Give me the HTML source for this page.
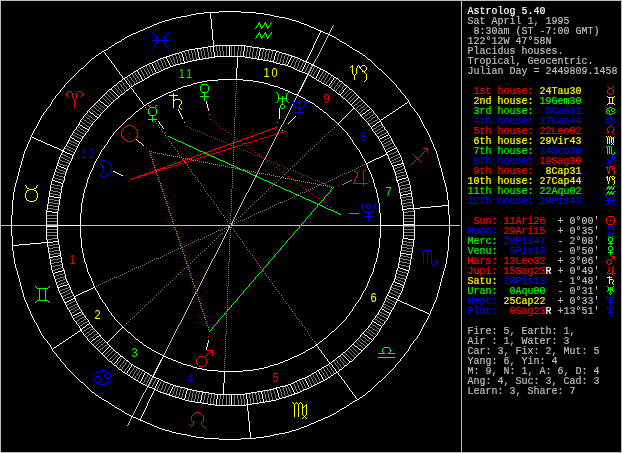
<!DOCTYPE html>
<html><head><meta charset="utf-8"><title>Astrolog 5.40</title>
<style>
html,body{margin:0;padding:0;background:#000;overflow:hidden}
svg{display:block;shape-rendering:crispEdges}
text{font-family:"Liberation Mono",monospace;white-space:pre}
text.sb{font-size:10px;stroke-width:0.2px}
text.hn{font-family:"Liberation Sans",sans-serif;font-size:13px;text-anchor:middle}
text.two{letter-spacing:2.2px}
</style></head><body>
<svg xml:space="preserve" width="622" height="453" viewBox="0 0 622 453">
<rect width="622" height="453" fill="#000"/>
<path fill="#ffffff" d="M219 11h22v1h-22zM204 12h15v1h-15zM241 12h15v1h-15zM196 13h8v1h-8zM256 13h8v1h-8zM191 14h5v1h-5zM264 14h6v1h-6zM187 15h4v1h-4zM270 15h4v1h-4zM181 16h6v1h-6zM274 16h5v1h-5zM176 17h5v1h-5zM279 17h6v1h-6zM172 18h4v1h-4zM285 18h4v1h-4zM169 19h3v1h-3zM289 19h3v1h-3zM165 20h4v1h-4zM292 20h4v1h-4zM162 21h3v1h-3zM296 21h3v1h-3zM159 22h3v1h-3zM299 22h2v1h-2zM157 23h2v1h-2zM301 23h3v1h-3zM154 24h3v1h-3zM304 24h3v1h-3zM152 25h2v1h-2zM307 25h2v1h-2zM150 26h2v1h-2zM309 26h2v1h-2zM147 27h3v1h-3zM311 27h3v1h-3zM145 28h2v1h-2zM314 28h2v1h-2zM143 29h2v1h-2zM316 29h2v1h-2zM140 30h3v1h-3zM318 30h3v1h-3zM138 31h2v1h-2zM320 31h3v1h-3zM136 32h2v1h-2zM323 32h2v1h-2zM133 33h3v1h-3zM325 33h3v1h-3zM131 34h2v1h-2zM328 34h2v1h-2zM129 35h2v1h-2zM330 35h2v1h-2zM127 36h2v1h-2zM332 36h2v1h-2zM125 37h2v1h-2zM334 37h2v1h-2zM122 39h2v1h-2zM337 39h2v1h-2zM119 41h2v1h-2zM340 41h2v1h-2zM117 42h2v1h-2zM342 42h2v1h-2zM115 43h2v1h-2zM344 43h2v1h-2zM112 45h2v1h-2zM215 45h31v1h-31zM347 45h2v1h-2zM208 46h7v1h-7zM246 46h6v1h-6zM109 47h2v1h-2zM202 47h6v1h-6zM252 47h7v1h-7zM350 47h2v1h-2zM195 48h7v1h-7zM259 48h6v1h-6zM106 49h2v1h-2zM189 49h6v1h-6zM265 49h6v1h-6zM353 49h2v1h-2zM104 50h2v1h-2zM185 50h4v1h-4zM271 50h5v1h-5zM355 50h2v1h-2zM102 51h2v1h-2zM182 51h3v1h-3zM276 51h3v1h-3zM357 51h2v1h-2zM179 52h3v1h-3zM279 52h3v1h-3zM99 53h2v1h-2zM175 53h4v1h-4zM282 53h4v1h-4zM360 53h2v1h-2zM172 54h3v1h-3zM286 54h3v1h-3zM96 55h2v1h-2zM169 55h3v1h-3zM289 55h3v1h-3zM363 55h2v1h-2zM166 56h3v1h-3zM214 56h31v1h-31zM291 56h4v1h-4zM163 57h4v1h-4zM209 57h6v1h-6zM245 57h6v1h-6zM295 57h3v1h-3zM92 58h2v1h-2zM160 58h3v1h-3zM203 58h6v1h-6zM251 58h6v1h-6zM298 58h2v1h-2zM158 59h2v1h-2zM197 59h6v1h-6zM257 59h6v1h-6zM300 59h2v1h-2zM368 59h2v1h-2zM156 60h2v1h-2zM192 60h5v1h-5zM263 60h6v1h-6zM302 60h2v1h-2zM154 61h2v1h-2zM188 61h4v1h-4zM269 61h5v1h-5zM304 61h3v1h-3zM152 62h2v1h-2zM184 62h4v1h-4zM273 62h3v1h-3zM306 62h3v1h-3zM149 63h3v1h-3zM180 63h5v1h-5zM276 63h4v1h-4zM309 63h2v1h-2zM147 64h2v1h-2zM176 64h4v1h-4zM280 64h5v1h-5zM311 64h2v1h-2zM145 65h2v1h-2zM173 65h3v1h-3zM285 65h3v1h-3zM313 65h2v1h-2zM143 66h2v1h-2zM170 66h3v1h-3zM288 66h3v1h-3zM315 66h2v1h-2zM141 67h2v1h-2zM168 67h2v1h-2zM291 67h2v1h-2zM317 67h2v1h-2zM81 68h2v1h-2zM139 68h2v1h-2zM165 68h3v1h-3zM293 68h2v1h-2zM319 68h2v1h-2zM163 69h2v1h-2zM295 69h2v1h-2zM320 69h3v1h-3zM379 69h2v1h-2zM136 70h2v1h-2zM161 70h2v1h-2zM297 70h2v1h-2zM323 70h2v1h-2zM134 71h2v1h-2zM159 71h2v1h-2zM299 71h3v1h-3zM325 71h2v1h-2zM156 72h3v1h-3zM302 72h3v1h-3zM131 73h2v1h-2zM154 73h2v1h-2zM305 73h2v1h-2zM328 73h2v1h-2zM152 74h2v1h-2zM307 74h2v1h-2zM128 75h2v1h-2zM150 75h2v1h-2zM309 75h2v1h-2zM331 75h2v1h-2zM125 77h2v1h-2zM147 77h2v1h-2zM312 77h2v1h-2zM334 77h2v1h-2zM123 78h2v1h-2zM145 78h2v1h-2zM314 78h2v1h-2zM336 78h2v1h-2zM218 79h25v1h-25zM142 80h2v1h-2zM207 80h11v1h-11zM243 80h10v1h-10zM317 80h2v1h-2zM119 81h2v1h-2zM140 81h2v1h-2zM202 81h5v1h-5zM253 81h6v1h-6zM319 81h2v1h-2zM340 81h2v1h-2zM138 82h2v1h-2zM197 82h5v1h-5zM259 82h5v1h-5zM136 83h2v1h-2zM193 83h4v1h-4zM264 83h4v1h-4zM322 83h2v1h-2zM134 84h2v1h-2zM191 84h2v1h-2zM268 84h2v1h-2zM324 84h2v1h-2zM114 85h2v1h-2zM187 85h4v1h-4zM270 85h4v1h-4zM326 85h2v1h-2zM345 85h2v1h-2zM131 86h2v1h-2zM183 86h4v1h-4zM274 86h4v1h-4zM181 87h2v1h-2zM278 87h2v1h-2zM329 87h2v1h-2zM178 88h3v1h-3zM280 88h3v1h-3zM109 89h3v1h-3zM176 89h2v1h-2zM283 89h2v1h-2zM350 89h2v1h-2zM126 90h2v1h-2zM173 90h3v1h-3zM285 90h3v1h-3zM333 90h2v1h-2zM171 91h2v1h-2zM288 91h2v1h-2zM168 92h3v1h-3zM290 92h2v1h-2zM166 93h2v1h-2zM292 93h2v1h-2zM121 94h2v1h-2zM164 94h2v1h-2zM294 94h4v1h-4zM338 94h3v1h-3zM162 95h2v1h-2zM297 95h2v1h-2zM118 96h2v1h-2zM160 96h2v1h-2zM299 96h2v1h-2zM158 97h2v1h-2zM301 97h2v1h-2zM358 97h2v1h-2zM116 98h2v1h-2zM156 98h2v1h-2zM303 98h2v1h-2zM343 98h2v1h-2zM154 99h2v1h-2zM98 100h2v1h-2zM152 100h2v1h-2zM306 100h2v1h-2zM308 101h2v1h-2zM101 102h2v1h-2zM149 102h2v1h-2zM310 102h2v1h-2zM147 103h2v1h-2zM312 103h2v1h-2zM405 103h2v1h-2zM350 104h2v1h-2zM105 105h2v1h-2zM144 105h2v1h-2zM402 105h2v1h-2zM107 106h2v1h-2zM316 106h2v1h-2zM399 107h2v1h-2zM140 108h2v1h-2zM353 108h2v1h-2zM320 109h2v1h-2zM396 109h2v1h-2zM367 110h2v1h-2zM136 111h2v1h-2zM393 111h2v1h-2zM324 112h2v1h-2zM91 113h2v1h-2zM363 113h2v1h-2zM390 113h2v1h-2zM360 115h2v1h-2zM387 115h2v1h-2zM95 116h2v1h-2zM97 117h2v1h-2zM384 117h2v1h-2zM128 118h2v1h-2zM332 119h2v1h-2zM381 119h2v1h-2zM379 121h2v1h-2zM377 122h2v1h-2zM337 123h2v1h-2zM78 124h2v1h-2zM80 125h2v1h-2zM373 125h2v1h-2zM83 127h2v1h-2zM85 128h2v1h-2zM87 129h2v1h-2zM386 135h2v1h-2zM384 136h2v1h-2zM32 137h2v1h-2zM70 137h2v1h-2zM382 137h2v1h-2zM34 138h2v1h-2zM72 138h2v1h-2zM380 138h2v1h-2zM36 139h2v1h-2zM38 140h3v1h-3zM75 140h2v1h-2zM41 141h2v1h-2zM77 141h2v1h-2zM43 142h2v1h-2zM139 142h2v1h-2zM45 143h2v1h-2zM47 144h3v1h-3zM50 145h2v1h-2zM52 146h2v1h-2zM54 147h3v1h-3zM57 148h2v1h-2zM394 148h3v1h-3zM59 149h2v1h-2zM392 149h2v1h-2zM61 150h3v1h-3zM390 150h2v1h-2zM62 151h3v1h-3zM388 151h2v1h-2zM65 152h2v1h-2zM386 152h2v1h-2zM67 153h3v1h-3zM70 154h2v1h-2zM385 154h3v1h-3zM72 155h2v1h-2zM383 155h2v1h-2zM381 156h2v1h-2zM379 157h2v1h-2zM376 158h3v1h-3zM374 159h2v1h-2zM372 160h2v1h-2zM370 161h2v1h-2zM368 162h2v1h-2zM366 163h2v1h-2zM401 163h3v1h-3zM397 164h4v1h-4zM57 165h2v1h-2zM394 165h3v1h-3zM59 166h2v1h-2zM392 166h2v1h-2zM61 167h3v1h-3zM64 168h2v1h-2zM66 169h2v1h-2zM113 171h2v1h-2zM115 172h2v1h-2zM117 173h2v1h-2zM119 174h2v1h-2zM121 175h2v1h-2zM406 177h2v1h-2zM402 178h4v1h-4zM399 179h3v1h-3zM52 180h3v1h-3zM396 180h3v1h-3zM55 181h3v1h-3zM58 182h3v1h-3zM61 183h2v1h-2zM408 193h4v1h-4zM403 194h5v1h-5zM400 195h3v1h-3zM49 196h5v1h-5zM54 197h7v1h-7zM442 205h7v1h-7zM431 206h11v1h-11zM420 207h11v1h-11zM407 208h13v1h-13zM402 209h5v1h-5zM46 211h6v1h-6zM52 212h6v1h-6zM403 224h12v1h-12zM57 225h24v1h-24zM380 225h24v1h-24zM46 226h12v1h-12zM403 238h5v1h-5zM408 239h7v1h-7zM53 241h6v1h-6zM41 242h12v1h-12zM30 243h11v1h-11zM19 244h11v1h-11zM12 245h7v1h-7zM400 253h6v1h-6zM406 254h6v1h-6zM58 255h3v1h-3zM53 256h5v1h-5zM49 257h4v1h-4zM398 267h2v1h-2zM400 268h3v1h-3zM403 269h3v1h-3zM62 270h3v1h-3zM406 270h3v1h-3zM58 271h4v1h-4zM55 272h3v1h-3zM53 273h2v1h-2zM393 281h2v1h-2zM395 282h2v1h-2zM397 283h3v1h-3zM67 284h2v1h-2zM400 284h2v1h-2zM63 285h4v1h-4zM402 285h2v1h-2zM60 286h3v1h-3zM57 287h3v1h-3zM93 287h2v1h-2zM91 288h2v1h-2zM89 289h2v1h-2zM87 290h2v1h-2zM84 291h3v1h-3zM82 292h2v1h-2zM80 293h2v1h-2zM78 294h2v1h-2zM76 295h2v1h-2zM387 295h2v1h-2zM74 296h2v1h-2zM389 296h2v1h-2zM391 297h3v1h-3zM73 298h3v1h-3zM394 298h2v1h-2zM71 299h2v1h-2zM396 299h2v1h-2zM69 300h2v1h-2zM397 300h3v1h-3zM67 301h2v1h-2zM400 301h2v1h-2zM64 302h3v1h-3zM402 302h2v1h-2zM404 303h3v1h-3zM407 304h2v1h-2zM409 305h2v1h-2zM411 306h2v1h-2zM413 307h3v1h-3zM416 308h2v1h-2zM382 309h2v1h-2zM418 309h2v1h-2zM420 310h3v1h-3zM385 311h2v1h-2zM423 311h2v1h-2zM79 312h2v1h-2zM387 312h2v1h-2zM425 312h2v1h-2zM77 313h2v1h-2zM389 313h2v1h-2zM427 313h2v1h-2zM75 314h2v1h-2zM73 315h2v1h-2zM372 321h2v1h-2zM374 322h2v1h-2zM87 324h2v1h-2zM377 324h2v1h-2zM379 325h2v1h-2zM83 327h2v1h-2zM122 327h2v1h-2zM80 329h2v1h-2zM80 330h2v1h-2zM78 331h2v1h-2zM332 331h2v1h-2zM128 332h2v1h-2zM75 333h2v1h-2zM362 333h2v1h-2zM72 335h2v1h-2zM99 335h2v1h-2zM365 335h2v1h-2zM97 336h2v1h-2zM69 337h2v1h-2zM324 338h2v1h-2zM369 338h2v1h-2zM66 339h2v1h-2zM93 339h2v1h-2zM136 339h2v1h-2zM63 341h2v1h-2zM320 341h2v1h-2zM106 342h2v1h-2zM140 342h2v1h-2zM60 343h2v1h-2zM316 344h2v1h-2zM352 344h2v1h-2zM57 345h2v1h-2zM144 345h2v1h-2zM315 345h2v1h-2zM109 346h2v1h-2zM355 346h2v1h-2zM54 347h2v1h-2zM147 347h2v1h-2zM312 347h2v1h-2zM149 348h2v1h-2zM310 348h2v1h-2zM308 349h2v1h-2zM359 349h2v1h-2zM152 350h2v1h-2zM306 350h2v1h-2zM361 350h2v1h-2zM154 351h2v1h-2zM116 352h2v1h-2zM156 352h2v1h-2zM303 352h2v1h-2zM343 352h2v1h-2zM101 353h2v1h-2zM158 353h2v1h-2zM301 353h2v1h-2zM160 354h2v1h-2zM299 354h2v1h-2zM341 354h2v1h-2zM162 355h2v1h-2zM297 355h2v1h-2zM120 356h3v1h-3zM163 356h3v1h-3zM294 356h3v1h-3zM338 356h2v1h-2zM166 357h2v1h-2zM292 357h2v1h-2zM168 358h3v1h-3zM290 358h2v1h-2zM171 359h2v1h-2zM288 359h2v1h-2zM126 360h2v1h-2zM173 360h3v1h-3zM285 360h3v1h-3zM333 360h2v1h-2zM109 361h2v1h-2zM176 361h2v1h-2zM283 361h2v1h-2zM349 361h3v1h-3zM178 362h3v1h-3zM280 362h3v1h-3zM181 363h2v1h-2zM278 363h2v1h-2zM329 363h2v1h-2zM131 364h2v1h-2zM183 364h4v1h-4zM274 364h4v1h-4zM114 365h2v1h-2zM187 365h4v1h-4zM270 365h4v1h-4zM326 365h2v1h-2zM345 365h2v1h-2zM134 366h2v1h-2zM191 366h2v1h-2zM268 366h2v1h-2zM324 366h2v1h-2zM136 367h2v1h-2zM193 367h4v1h-4zM264 367h4v1h-4zM322 367h2v1h-2zM138 368h2v1h-2zM197 368h5v1h-5zM259 368h5v1h-5zM119 369h2v1h-2zM140 369h2v1h-2zM202 369h5v1h-5zM253 369h6v1h-6zM319 369h2v1h-2zM340 369h2v1h-2zM142 370h2v1h-2zM207 370h11v1h-11zM243 370h10v1h-10zM317 370h2v1h-2zM218 371h25v1h-25zM123 372h2v1h-2zM145 372h2v1h-2zM314 372h2v1h-2zM336 372h2v1h-2zM125 373h2v1h-2zM147 373h2v1h-2zM312 373h2v1h-2zM334 373h2v1h-2zM128 375h2v1h-2zM150 375h2v1h-2zM309 375h2v1h-2zM331 375h2v1h-2zM152 376h2v1h-2zM307 376h2v1h-2zM131 377h2v1h-2zM154 377h2v1h-2zM305 377h2v1h-2zM328 377h2v1h-2zM156 378h3v1h-3zM302 378h3v1h-3zM134 379h2v1h-2zM159 379h2v1h-2zM299 379h3v1h-3zM325 379h2v1h-2zM136 380h2v1h-2zM161 380h2v1h-2zM297 380h2v1h-2zM323 380h2v1h-2zM163 381h2v1h-2zM295 381h2v1h-2zM321 381h2v1h-2zM379 381h2v1h-2zM81 382h2v1h-2zM139 382h2v1h-2zM165 382h3v1h-3zM293 382h2v1h-2zM319 382h2v1h-2zM141 383h2v1h-2zM168 383h2v1h-2zM291 383h2v1h-2zM317 383h2v1h-2zM143 384h2v1h-2zM170 384h3v1h-3zM288 384h3v1h-3zM315 384h2v1h-2zM145 385h2v1h-2zM173 385h3v1h-3zM285 385h3v1h-3zM313 385h2v1h-2zM147 386h2v1h-2zM176 386h4v1h-4zM280 386h5v1h-5zM311 386h2v1h-2zM149 387h3v1h-3zM180 387h5v1h-5zM276 387h4v1h-4zM309 387h2v1h-2zM152 388h3v1h-3zM185 388h3v1h-3zM273 388h4v1h-4zM307 388h2v1h-2zM154 389h2v1h-2zM187 389h5v1h-5zM269 389h4v1h-4zM304 389h3v1h-3zM156 390h2v1h-2zM192 390h5v1h-5zM263 390h6v1h-6zM302 390h2v1h-2zM158 391h2v1h-2zM197 391h6v1h-6zM257 391h6v1h-6zM300 391h2v1h-2zM368 391h2v1h-2zM92 392h2v1h-2zM160 392h3v1h-3zM202 392h7v1h-7zM251 392h6v1h-6zM298 392h2v1h-2zM163 393h3v1h-3zM209 393h6v1h-6zM245 393h6v1h-6zM294 393h4v1h-4zM166 394h4v1h-4zM215 394h30v1h-30zM292 394h3v1h-3zM96 395h2v1h-2zM169 395h3v1h-3zM289 395h3v1h-3zM363 395h2v1h-2zM172 396h3v1h-3zM286 396h3v1h-3zM99 397h2v1h-2zM175 397h4v1h-4zM282 397h4v1h-4zM360 397h2v1h-2zM179 398h3v1h-3zM279 398h3v1h-3zM102 399h2v1h-2zM182 399h3v1h-3zM276 399h3v1h-3zM357 399h2v1h-2zM104 400h2v1h-2zM185 400h4v1h-4zM271 400h5v1h-5zM355 400h2v1h-2zM106 401h2v1h-2zM189 401h6v1h-6zM265 401h6v1h-6zM353 401h2v1h-2zM195 402h7v1h-7zM259 402h6v1h-6zM109 403h2v1h-2zM202 403h6v1h-6zM252 403h7v1h-7zM350 403h2v1h-2zM208 404h7v1h-7zM246 404h6v1h-6zM112 405h2v1h-2zM215 405h31v1h-31zM347 405h2v1h-2zM115 407h2v1h-2zM344 407h2v1h-2zM117 408h2v1h-2zM342 408h2v1h-2zM119 409h2v1h-2zM340 409h2v1h-2zM122 411h2v1h-2zM337 411h2v1h-2zM125 413h2v1h-2zM334 413h2v1h-2zM127 414h2v1h-2zM332 414h2v1h-2zM129 415h2v1h-2zM330 415h2v1h-2zM131 416h2v1h-2zM328 416h2v1h-2zM133 417h3v1h-3zM325 417h3v1h-3zM136 418h2v1h-2zM323 418h2v1h-2zM138 419h3v1h-3zM321 419h2v1h-2zM140 420h3v1h-3zM318 420h3v1h-3zM143 421h2v1h-2zM316 421h2v1h-2zM145 422h2v1h-2zM314 422h2v1h-2zM147 423h3v1h-3zM311 423h3v1h-3zM150 424h2v1h-2zM309 424h2v1h-2zM152 425h2v1h-2zM307 425h2v1h-2zM154 426h3v1h-3zM304 426h3v1h-3zM157 427h2v1h-2zM301 427h3v1h-3zM159 428h3v1h-3zM299 428h2v1h-2zM162 429h3v1h-3zM296 429h3v1h-3zM165 430h4v1h-4zM292 430h4v1h-4zM169 431h3v1h-3zM289 431h3v1h-3zM172 432h4v1h-4zM285 432h4v1h-4zM176 433h5v1h-5zM279 433h6v1h-6zM181 434h6v1h-6zM274 434h5v1h-5zM187 435h4v1h-4zM270 435h4v1h-4zM191 436h5v1h-5zM264 436h6v1h-6zM196 437h8v1h-8zM256 437h8v1h-8zM204 438h15v1h-15zM241 438h15v1h-15zM219 439h22v1h-22zM11 215h1v21h-1zM12 200h1v15h-1zM12 236h1v9h-1zM12 246h1v5h-1zM13 192h1v8h-1zM13 251h1v7h-1zM14 187h1v5h-1zM14 258h1v6h-1zM15 183h1v4h-1zM15 264h1v4h-1zM16 180h1v3h-1zM16 268h1v3h-1zM17 176h1v4h-1zM17 271h1v4h-1zM18 172h1v4h-1zM18 275h1v3h-1zM19 168h1v4h-1zM19 278h1v4h-1zM20 165h1v3h-1zM20 282h1v4h-1zM21 161h1v4h-1zM21 286h1v4h-1zM22 158h1v3h-1zM22 290h1v3h-1zM23 154h1v4h-1zM23 293h1v4h-1zM24 151h1v3h-1zM24 297h1v3h-1zM25 149h1v2h-1zM25 300h1v2h-1zM26 147h1v2h-1zM26 302h1v2h-1zM27 144h1v3h-1zM27 304h1v3h-1zM28 142h1v2h-1zM28 307h1v2h-1zM29 140h1v2h-1zM29 309h1v2h-1zM30 137h1v3h-1zM30 311h1v3h-1zM31 135h1v2h-1zM31 314h1v2h-1zM32 133h1v2h-1zM32 316h1v2h-1zM33 131h1v2h-1zM33 318h1v2h-1zM34 129h1v2h-1zM34 320h1v2h-1zM35 128h1v1h-1zM35 322h1v1h-1zM36 126h1v2h-1zM36 323h1v2h-1zM37 124h1v2h-1zM37 325h1v2h-1zM38 122h1v2h-1zM38 327h1v2h-1zM39 120h1v2h-1zM39 329h1v2h-1zM40 118h1v2h-1zM40 331h1v2h-1zM41 116h1v2h-1zM41 333h1v2h-1zM42 115h1v1h-1zM42 335h1v1h-1zM43 113h1v2h-1zM43 336h1v2h-1zM44 112h1v1h-1zM44 338h1v1h-1zM45 111h1v1h-1zM45 339h1v1h-1zM46 109h1v2h-1zM46 210h1v1h-1zM46 212h1v14h-1zM46 227h1v13h-1zM46 340h1v1h-1zM47 108h1v1h-1zM47 204h1v6h-1zM47 240h1v2h-1zM47 243h1v4h-1zM47 341h1v2h-1zM48 107h1v1h-1zM48 197h1v7h-1zM48 247h1v6h-1zM48 343h1v1h-1zM49 106h1v1h-1zM49 191h1v5h-1zM49 253h1v4h-1zM49 258h1v1h-1zM49 344h1v1h-1zM50 104h1v2h-1zM50 185h1v6h-1zM50 259h1v6h-1zM50 345h1v2h-1zM51 102h1v2h-1zM51 181h1v4h-1zM51 265h1v5h-1zM51 347h1v2h-1zM52 100h1v2h-1zM52 178h1v2h-1zM52 270h1v3h-1zM52 349h1v2h-1zM53 99h1v1h-1zM53 175h1v3h-1zM53 274h1v2h-1zM53 348h1v1h-1zM53 351h1v1h-1zM54 98h1v1h-1zM54 172h1v3h-1zM54 276h1v3h-1zM54 352h1v1h-1zM55 96h1v2h-1zM55 169h1v3h-1zM55 279h1v3h-1zM55 353h1v1h-1zM56 95h1v1h-1zM56 166h1v3h-1zM56 282h1v3h-1zM56 346h1v1h-1zM56 354h1v2h-1zM57 94h1v1h-1zM57 163h1v2h-1zM57 211h1v1h-1zM57 213h1v12h-1zM57 227h1v12h-1zM57 285h1v2h-1zM57 356h1v1h-1zM58 93h1v1h-1zM58 160h1v3h-1zM58 205h1v6h-1zM58 239h1v2h-1zM58 242h1v3h-1zM58 288h1v3h-1zM58 357h1v1h-1zM59 92h1v1h-1zM59 157h1v3h-1zM59 199h1v6h-1zM59 245h1v6h-1zM59 291h1v2h-1zM59 344h1v1h-1zM59 358h1v1h-1zM60 90h1v2h-1zM60 155h1v2h-1zM60 193h1v4h-1zM60 198h1v1h-1zM60 251h1v4h-1zM60 256h1v1h-1zM60 293h1v2h-1zM60 359h1v2h-1zM61 89h1v1h-1zM61 153h1v2h-1zM61 187h1v6h-1zM61 257h1v6h-1zM61 295h1v2h-1zM61 361h1v1h-1zM62 88h1v1h-1zM62 152h1v1h-1zM62 184h1v3h-1zM62 263h1v5h-1zM62 297h1v2h-1zM62 342h1v1h-1zM62 362h1v1h-1zM63 87h1v1h-1zM63 149h1v1h-1zM63 181h1v2h-1zM63 268h1v2h-1zM63 299h1v2h-1zM63 363h1v1h-1zM64 85h1v2h-1zM64 147h1v2h-1zM64 176h1v5h-1zM64 271h1v3h-1zM64 301h1v1h-1zM64 364h1v1h-1zM65 84h1v1h-1zM65 146h1v1h-1zM65 172h1v4h-1zM65 274h1v5h-1zM65 303h1v2h-1zM65 340h1v1h-1zM65 365h1v2h-1zM66 83h1v1h-1zM66 144h1v2h-1zM66 170h1v2h-1zM66 279h1v2h-1zM66 305h1v2h-1zM66 367h1v1h-1zM67 82h1v1h-1zM67 142h1v2h-1zM67 167h1v2h-1zM67 281h1v2h-1zM67 307h1v2h-1zM67 368h1v1h-1zM68 81h1v1h-1zM68 140h1v2h-1zM68 165h1v2h-1zM68 283h1v1h-1zM68 309h1v1h-1zM68 338h1v1h-1zM68 369h1v1h-1zM69 80h1v1h-1zM69 138h1v2h-1zM69 163h1v2h-1zM69 285h1v2h-1zM69 310h1v2h-1zM69 370h1v1h-1zM70 79h1v1h-1zM70 136h1v1h-1zM70 161h1v2h-1zM70 287h1v3h-1zM70 312h1v2h-1zM70 371h1v1h-1zM71 78h1v1h-1zM71 135h1v1h-1zM71 159h1v2h-1zM71 290h1v2h-1zM71 314h1v2h-1zM71 336h1v1h-1zM71 372h1v1h-1zM72 77h1v1h-1zM72 133h1v2h-1zM72 156h1v3h-1zM72 292h1v2h-1zM72 316h1v2h-1zM72 373h1v1h-1zM73 76h1v1h-1zM73 131h1v2h-1zM73 154h1v1h-1zM73 294h1v2h-1zM73 318h1v2h-1zM73 374h1v1h-1zM74 75h1v1h-1zM74 130h1v1h-1zM74 139h1v1h-1zM74 152h1v2h-1zM74 297h1v1h-1zM74 320h1v1h-1zM74 334h1v1h-1zM74 375h1v1h-1zM75 74h1v1h-1zM75 129h1v1h-1zM75 150h1v2h-1zM75 299h1v2h-1zM75 321h1v1h-1zM75 376h1v1h-1zM76 73h1v1h-1zM76 127h1v2h-1zM76 148h1v2h-1zM76 301h1v2h-1zM76 322h1v2h-1zM76 377h1v1h-1zM77 72h1v1h-1zM77 126h1v1h-1zM77 146h1v2h-1zM77 303h1v2h-1zM77 324h1v1h-1zM77 332h1v1h-1zM77 378h1v1h-1zM78 71h1v1h-1zM78 125h1v1h-1zM78 144h1v2h-1zM78 305h1v2h-1zM78 325h1v1h-1zM78 379h1v1h-1zM79 70h1v1h-1zM79 122h1v2h-1zM79 142h1v2h-1zM79 307h1v2h-1zM79 326h1v2h-1zM79 380h1v1h-1zM80 69h1v1h-1zM80 120h1v2h-1zM80 141h1v1h-1zM80 213h1v12h-1zM80 226h1v12h-1zM80 309h1v1h-1zM80 328h1v1h-1zM80 381h1v1h-1zM81 119h1v1h-1zM81 139h1v2h-1zM81 203h1v10h-1zM81 238h1v10h-1zM81 310h1v2h-1zM81 331h1v1h-1zM82 118h1v1h-1zM82 126h1v1h-1zM82 137h1v2h-1zM82 198h1v5h-1zM82 248h1v5h-1zM82 312h1v2h-1zM82 328h1v1h-1zM82 332h1v1h-1zM83 67h1v1h-1zM83 116h1v2h-1zM83 136h1v1h-1zM83 193h1v5h-1zM83 253h1v5h-1zM83 314h1v1h-1zM83 333h1v2h-1zM83 383h1v1h-1zM84 66h1v1h-1zM84 115h1v1h-1zM84 135h1v1h-1zM84 189h1v4h-1zM84 258h1v4h-1zM84 315h1v1h-1zM84 335h1v1h-1zM84 384h1v1h-1zM85 65h1v1h-1zM85 114h1v1h-1zM85 133h1v2h-1zM85 187h1v2h-1zM85 262h1v2h-1zM85 316h1v2h-1zM85 326h1v1h-1zM85 336h1v1h-1zM85 385h1v1h-1zM86 64h1v1h-1zM86 113h1v1h-1zM86 132h1v1h-1zM86 183h1v4h-1zM86 264h1v4h-1zM86 318h1v1h-1zM86 325h1v1h-1zM86 337h1v1h-1zM86 386h1v1h-1zM87 63h1v1h-1zM87 111h1v2h-1zM87 131h1v1h-1zM87 179h1v4h-1zM87 268h1v4h-1zM87 319h1v1h-1zM87 338h1v2h-1zM87 387h1v1h-1zM88 62h1v1h-1zM88 110h1v1h-1zM88 130h1v1h-1zM88 177h1v2h-1zM88 272h1v2h-1zM88 320h1v2h-1zM88 340h1v1h-1zM88 388h1v1h-1zM89 61h1v1h-1zM89 109h1v1h-1zM89 111h1v1h-1zM89 127h1v2h-1zM89 174h1v3h-1zM89 274h1v2h-1zM89 322h1v2h-1zM89 341h1v1h-1zM89 389h1v1h-1zM90 60h1v1h-1zM90 108h1v1h-1zM90 112h1v1h-1zM90 126h1v1h-1zM90 172h1v2h-1zM90 276h1v2h-1zM90 324h1v1h-1zM90 342h1v1h-1zM90 390h1v1h-1zM91 59h1v1h-1zM91 107h1v1h-1zM91 125h1v1h-1zM91 170h1v2h-1zM91 278h1v3h-1zM91 325h1v1h-1zM91 341h1v1h-1zM91 343h1v1h-1zM91 391h1v1h-1zM92 106h1v1h-1zM92 123h1v2h-1zM92 168h1v2h-1zM92 281h1v2h-1zM92 326h1v2h-1zM92 340h1v1h-1zM92 344h1v1h-1zM93 105h1v1h-1zM93 114h1v1h-1zM93 122h1v1h-1zM93 165h1v3h-1zM93 283h1v3h-1zM93 328h1v1h-1zM93 345h1v1h-1zM94 57h1v1h-1zM94 104h1v1h-1zM94 115h1v1h-1zM94 121h1v1h-1zM94 163h1v2h-1zM94 286h1v1h-1zM94 329h1v1h-1zM94 346h1v1h-1zM94 393h1v1h-1zM95 56h1v1h-1zM95 103h1v1h-1zM95 120h1v1h-1zM95 161h1v2h-1zM95 288h1v2h-1zM95 330h1v1h-1zM95 338h1v1h-1zM95 347h1v1h-1zM95 394h1v1h-1zM96 102h1v1h-1zM96 119h1v1h-1zM96 159h1v2h-1zM96 290h1v1h-1zM96 331h1v1h-1zM96 337h1v1h-1zM96 348h1v1h-1zM97 101h1v1h-1zM97 118h1v1h-1zM97 158h1v1h-1zM97 291h1v2h-1zM97 332h1v1h-1zM97 349h1v1h-1zM98 54h1v1h-1zM98 156h1v2h-1zM98 293h1v2h-1zM98 333h1v1h-1zM98 350h1v1h-1zM98 396h1v1h-1zM99 99h1v1h-1zM99 116h1v1h-1zM99 154h1v2h-1zM99 295h1v2h-1zM99 334h1v1h-1zM99 351h1v1h-1zM100 98h1v1h-1zM100 101h1v1h-1zM100 114h1v2h-1zM100 152h1v2h-1zM100 297h1v2h-1zM100 336h1v1h-1zM100 352h1v1h-1zM101 52h1v1h-1zM101 97h1v1h-1zM101 113h1v1h-1zM101 150h1v2h-1zM101 299h1v1h-1zM101 337h1v1h-1zM101 398h1v1h-1zM102 96h1v1h-1zM102 112h1v1h-1zM102 149h1v1h-1zM102 300h1v2h-1zM102 338h1v1h-1zM102 354h1v1h-1zM103 95h1v1h-1zM103 103h1v1h-1zM103 111h1v1h-1zM103 148h1v1h-1zM103 302h1v1h-1zM103 339h1v1h-1zM103 352h1v1h-1zM103 355h1v1h-1zM104 52h1v1h-1zM104 94h1v1h-1zM104 104h1v1h-1zM104 110h1v1h-1zM104 146h1v2h-1zM104 303h1v1h-1zM104 340h1v1h-1zM104 351h1v1h-1zM104 356h1v1h-1zM105 53h1v2h-1zM105 93h1v1h-1zM105 109h1v1h-1zM105 145h1v1h-1zM105 304h1v2h-1zM105 341h1v1h-1zM105 350h1v1h-1zM105 357h1v1h-1zM106 55h1v1h-1zM106 92h1v1h-1zM106 108h1v1h-1zM106 144h1v1h-1zM106 306h1v1h-1zM106 349h1v1h-1zM106 358h1v1h-1zM107 56h1v1h-1zM107 91h1v1h-1zM107 107h1v1h-1zM107 142h1v2h-1zM107 307h1v2h-1zM107 343h1v1h-1zM107 348h1v1h-1zM107 359h1v1h-1zM108 48h1v1h-1zM108 57h1v2h-1zM108 90h1v1h-1zM108 140h1v2h-1zM108 309h1v2h-1zM108 341h1v1h-1zM108 344h1v1h-1zM108 347h1v1h-1zM108 360h1v1h-1zM108 402h1v1h-1zM109 59h1v1h-1zM109 105h1v1h-1zM109 139h1v1h-1zM109 311h1v1h-1zM109 340h1v1h-1zM109 345h1v1h-1zM110 60h1v1h-1zM110 104h1v1h-1zM110 137h1v2h-1zM110 312h1v1h-1zM110 339h1v1h-1zM111 46h1v1h-1zM111 61h1v2h-1zM111 88h1v1h-1zM111 103h1v1h-1zM111 136h1v1h-1zM111 313h1v2h-1zM111 338h1v1h-1zM111 347h1v1h-1zM111 362h1v1h-1zM111 404h1v1h-1zM112 63h1v1h-1zM112 87h1v1h-1zM112 90h1v1h-1zM112 102h1v1h-1zM112 135h1v1h-1zM112 315h1v1h-1zM112 337h1v1h-1zM112 348h1v1h-1zM112 363h1v1h-1zM113 64h1v1h-1zM113 86h1v1h-1zM113 91h1v1h-1zM113 101h1v1h-1zM113 133h1v2h-1zM113 316h1v1h-1zM113 336h1v1h-1zM113 349h1v1h-1zM113 364h1v1h-1zM114 44h1v1h-1zM114 65h1v2h-1zM114 92h1v1h-1zM114 100h1v1h-1zM114 132h1v1h-1zM114 317h1v2h-1zM114 335h1v1h-1zM114 350h1v1h-1zM114 363h1v1h-1zM114 406h1v1h-1zM115 67h1v1h-1zM115 93h1v1h-1zM115 99h1v1h-1zM115 131h1v1h-1zM115 319h1v1h-1zM115 334h1v1h-1zM115 351h1v1h-1zM115 362h1v1h-1zM116 68h1v2h-1zM116 84h1v1h-1zM116 94h1v1h-1zM116 130h1v1h-1zM116 320h1v1h-1zM116 333h1v1h-1zM116 361h1v1h-1zM116 366h1v1h-1zM117 70h1v1h-1zM117 83h1v1h-1zM117 95h1v1h-1zM117 129h1v1h-1zM117 321h1v1h-1zM117 332h1v1h-1zM117 359h1v2h-1zM117 367h1v1h-1zM118 71h1v1h-1zM118 82h1v1h-1zM118 97h1v1h-1zM118 128h1v1h-1zM118 322h1v1h-1zM118 331h1v1h-1zM118 353h1v1h-1zM118 358h1v1h-1zM118 368h1v1h-1zM119 72h1v2h-1zM119 127h1v1h-1zM119 323h1v1h-1zM119 330h1v1h-1zM119 354h1v1h-1zM119 357h1v1h-1zM120 74h1v1h-1zM120 95h1v1h-1zM120 126h1v1h-1zM120 324h1v1h-1zM120 329h1v1h-1zM120 355h1v1h-1zM121 40h1v1h-1zM121 75h1v1h-1zM121 80h1v1h-1zM121 125h1v1h-1zM121 325h1v1h-1zM121 328h1v1h-1zM121 370h1v1h-1zM121 410h1v1h-1zM122 76h1v2h-1zM122 79h1v1h-1zM122 124h1v1h-1zM122 326h1v1h-1zM122 371h1v1h-1zM123 93h1v1h-1zM123 123h1v1h-1zM123 357h1v1h-1zM124 38h1v1h-1zM124 79h1v1h-1zM124 92h1v1h-1zM124 122h1v1h-1zM124 328h1v1h-1zM124 358h1v1h-1zM124 412h1v1h-1zM125 80h1v1h-1zM125 91h1v1h-1zM125 121h1v1h-1zM125 329h1v1h-1zM125 359h1v1h-1zM126 81h1v2h-1zM126 120h1v1h-1zM126 330h1v1h-1zM127 76h1v1h-1zM127 83h1v1h-1zM127 119h1v1h-1zM127 331h1v1h-1zM127 371h1v2h-1zM127 374h1v1h-1zM128 84h1v1h-1zM128 89h1v1h-1zM128 361h1v1h-1zM128 370h1v1h-1zM129 85h1v2h-1zM129 88h1v1h-1zM129 362h1v1h-1zM129 368h1v2h-1zM130 74h1v1h-1zM130 87h1v1h-1zM130 117h1v1h-1zM130 333h1v1h-1zM130 363h1v1h-1zM130 367h1v1h-1zM130 376h1v1h-1zM131 88h1v1h-1zM131 116h1v1h-1zM131 334h1v1h-1zM131 365h1v2h-1zM132 89h1v1h-1zM132 115h1v1h-1zM132 335h1v1h-1zM133 72h1v1h-1zM133 85h1v1h-1zM133 90h1v2h-1zM133 114h1v1h-1zM133 336h1v1h-1zM133 365h1v1h-1zM133 378h1v1h-1zM134 92h1v1h-1zM134 113h1v1h-1zM134 337h1v1h-1zM135 93h1v1h-1zM135 112h1v1h-1zM135 338h1v1h-1zM136 94h1v2h-1zM136 139h1v1h-1zM137 71h1v1h-1zM137 96h1v1h-1zM137 140h1v1h-1zM138 69h1v1h-1zM138 72h1v2h-1zM138 97h1v1h-1zM138 110h1v1h-1zM138 141h1v1h-1zM138 340h1v1h-1zM138 381h1v1h-1zM139 74h1v1h-1zM139 98h1v2h-1zM139 109h1v1h-1zM139 341h1v1h-1zM140 75h1v2h-1zM140 100h1v1h-1zM140 381h1v1h-1zM140 418h1v1h-1zM141 77h1v2h-1zM141 101h1v1h-1zM141 143h1v1h-1zM141 379h1v2h-1zM141 416h1v2h-1zM142 79h1v1h-1zM142 102h1v2h-1zM142 107h1v1h-1zM142 144h1v1h-1zM142 343h1v1h-1zM142 377h1v2h-1zM142 414h1v2h-1zM143 104h1v1h-1zM143 106h1v1h-1zM143 145h1v1h-1zM143 344h1v1h-1zM143 375h1v2h-1zM143 412h1v2h-1zM144 79h1v1h-1zM144 371h1v1h-1zM144 373h1v2h-1zM144 410h1v2h-1zM145 408h1v2h-1zM146 104h1v1h-1zM146 346h1v1h-1zM146 406h1v2h-1zM147 403h1v3h-1zM148 401h1v2h-1zM149 76h1v1h-1zM149 374h1v1h-1zM149 399h1v2h-1zM150 397h1v2h-1zM151 101h1v1h-1zM151 349h1v1h-1zM151 395h1v2h-1zM152 64h1v2h-1zM152 393h1v2h-1zM153 66h1v2h-1zM153 375h1v1h-1zM153 391h1v2h-1zM154 68h1v2h-1zM154 373h1v2h-1zM154 390h1v1h-1zM155 70h1v2h-1zM155 371h1v2h-1zM155 386h1v2h-1zM156 369h1v2h-1zM156 384h1v2h-1zM157 367h1v2h-1zM157 382h1v2h-1zM158 121h1v1h-1zM158 365h1v2h-1zM158 380h1v2h-1zM159 122h1v2h-1zM159 363h1v2h-1zM160 124h1v1h-1zM160 361h1v2h-1zM161 125h1v1h-1zM161 359h1v2h-1zM162 126h1v2h-1zM162 357h1v2h-1zM163 128h1v1h-1zM166 58h1v1h-1zM167 59h1v2h-1zM168 61h1v2h-1zM169 63h1v2h-1zM169 393h1v1h-1zM170 65h1v1h-1zM170 391h1v2h-1zM171 389h1v2h-1zM172 387h1v2h-1zM173 386h1v1h-1zM178 109h1v2h-1zM179 111h1v2h-1zM180 113h1v2h-1zM181 53h1v1h-1zM181 115h1v2h-1zM182 54h1v3h-1zM182 117h1v2h-1zM183 57h1v4h-1zM184 61h1v1h-1zM184 398h1v1h-1zM185 394h1v4h-1zM186 391h1v3h-1zM187 390h1v1h-1zM197 49h1v3h-1zM198 52h1v5h-1zM199 57h1v2h-1zM200 400h1v2h-1zM201 395h1v5h-1zM202 393h1v2h-1zM206 101h1v3h-1zM206 347h1v3h-1zM207 104h1v4h-1zM207 343h1v4h-1zM208 108h1v3h-1zM208 340h1v3h-1zM210 13h1v6h-1zM211 19h1v10h-1zM212 29h1v11h-1zM213 40h1v6h-1zM213 47h1v5h-1zM214 52h1v4h-1zM216 399h1v6h-1zM217 395h1v4h-1zM223 383h1v11h-1zM224 372h1v11h-1zM229 46h1v10h-1zM231 395h1v10h-1zM236 68h1v11h-1zM237 57h1v11h-1zM243 51h1v5h-1zM244 46h1v5h-1zM246 394h1v5h-1zM247 399h1v5h-1zM247 405h1v6h-1zM248 411h1v10h-1zM249 421h1v11h-1zM250 432h1v6h-1zM258 56h1v3h-1zM259 51h1v5h-1zM260 49h1v2h-1zM261 392h1v2h-1zM262 394h1v5h-1zM263 399h1v3h-1zM273 60h1v1h-1zM274 56h1v4h-1zM275 53h1v3h-1zM276 52h1v1h-1zM276 389h1v1h-1zM277 390h1v3h-1zM278 393h1v4h-1zM279 108h1v11h-1zM279 397h1v1h-1zM287 64h1v1h-1zM288 62h1v2h-1zM288 123h1v1h-1zM289 60h1v2h-1zM289 122h1v1h-1zM290 58h1v2h-1zM290 121h1v1h-1zM290 385h1v1h-1zM291 57h1v1h-1zM291 120h1v1h-1zM291 386h1v2h-1zM292 119h1v1h-1zM292 388h1v2h-1zM293 118h1v1h-1zM293 390h1v2h-1zM294 117h1v1h-1zM294 392h1v1h-1zM295 116h1v1h-1zM298 92h1v2h-1zM299 90h1v2h-1zM300 88h1v2h-1zM301 86h1v2h-1zM302 69h1v2h-1zM302 84h1v2h-1zM303 67h1v2h-1zM303 82h1v2h-1zM304 65h1v2h-1zM304 80h1v2h-1zM305 63h1v2h-1zM305 78h1v2h-1zM305 99h1v1h-1zM305 351h1v1h-1zM305 379h1v2h-1zM306 60h1v1h-1zM306 76h1v2h-1zM306 381h1v2h-1zM307 58h1v2h-1zM307 75h1v1h-1zM307 383h1v2h-1zM308 56h1v2h-1zM308 385h1v2h-1zM309 54h1v2h-1zM310 52h1v2h-1zM311 50h1v2h-1zM311 76h1v1h-1zM311 374h1v1h-1zM312 48h1v2h-1zM313 45h1v3h-1zM314 43h1v2h-1zM314 104h1v1h-1zM314 346h1v1h-1zM315 41h1v2h-1zM315 105h1v1h-1zM316 39h1v2h-1zM316 76h1v2h-1zM316 79h1v1h-1zM316 371h1v1h-1zM317 37h1v2h-1zM317 74h1v2h-1zM317 346h1v1h-1zM318 35h1v2h-1zM318 72h1v2h-1zM318 107h1v1h-1zM318 343h1v1h-1zM318 347h1v2h-1zM318 371h1v1h-1zM319 33h1v2h-1zM319 70h1v2h-1zM319 108h1v1h-1zM319 342h1v1h-1zM319 349h1v1h-1zM319 372h1v2h-1zM320 32h1v1h-1zM320 350h1v1h-1zM320 374h1v1h-1zM321 82h1v1h-1zM321 351h1v2h-1zM321 368h1v1h-1zM321 375h1v2h-1zM322 110h1v1h-1zM322 340h1v1h-1zM322 353h1v1h-1zM322 377h1v2h-1zM323 111h1v1h-1zM323 339h1v1h-1zM323 354h1v1h-1zM323 379h1v1h-1zM324 355h1v2h-1zM325 357h1v1h-1zM326 113h1v1h-1zM326 337h1v1h-1zM326 358h1v1h-1zM327 72h1v1h-1zM327 114h1v1h-1zM327 336h1v1h-1zM327 359h1v2h-1zM327 378h1v1h-1zM328 86h1v1h-1zM328 115h1v1h-1zM328 335h1v1h-1zM328 361h1v1h-1zM328 364h1v1h-1zM329 84h1v2h-1zM329 116h1v1h-1zM329 334h1v1h-1zM329 362h1v1h-1zM330 74h1v1h-1zM330 83h1v1h-1zM330 117h1v1h-1zM330 333h1v1h-1zM330 376h1v1h-1zM331 81h1v2h-1zM331 88h1v1h-1zM331 118h1v1h-1zM331 332h1v1h-1zM331 362h1v1h-1zM331 364h1v1h-1zM332 80h1v1h-1zM332 89h1v1h-1zM332 361h1v1h-1zM332 365h1v2h-1zM333 76h1v1h-1zM333 78h1v2h-1zM333 367h1v1h-1zM333 374h1v1h-1zM334 120h1v1h-1zM334 330h1v1h-1zM334 368h1v1h-1zM335 91h1v1h-1zM335 121h1v1h-1zM335 329h1v1h-1zM335 359h1v1h-1zM335 369h1v2h-1zM336 38h1v1h-1zM336 92h1v1h-1zM336 122h1v1h-1zM336 328h1v1h-1zM336 358h1v1h-1zM336 371h1v1h-1zM336 412h1v1h-1zM337 93h1v1h-1zM337 327h1v1h-1zM337 357h1v1h-1zM338 79h1v1h-1zM338 124h1v1h-1zM338 326h1v1h-1zM338 371h1v1h-1zM338 373h1v2h-1zM339 40h1v1h-1zM339 80h1v1h-1zM339 122h1v1h-1zM339 125h1v1h-1zM339 325h1v1h-1zM339 370h1v1h-1zM339 375h1v1h-1zM339 410h1v1h-1zM340 95h1v1h-1zM340 121h1v1h-1zM340 126h1v1h-1zM340 324h1v1h-1zM340 355h1v1h-1zM340 376h1v1h-1zM341 93h1v1h-1zM341 96h1v1h-1zM341 120h1v1h-1zM341 127h1v1h-1zM341 323h1v1h-1zM341 377h1v2h-1zM342 82h1v1h-1zM342 92h1v1h-1zM342 97h1v1h-1zM342 119h1v1h-1zM342 128h1v1h-1zM342 322h1v1h-1zM342 353h1v1h-1zM342 368h1v1h-1zM342 379h1v1h-1zM343 83h1v1h-1zM343 90h1v2h-1zM343 118h1v1h-1zM343 129h1v1h-1zM343 321h1v1h-1zM343 355h1v1h-1zM343 367h1v1h-1zM343 380h1v1h-1zM344 84h1v1h-1zM344 89h1v1h-1zM344 117h1v1h-1zM344 130h1v1h-1zM344 320h1v1h-1zM344 356h1v1h-1zM344 366h1v1h-1zM344 381h1v2h-1zM345 88h1v1h-1zM345 99h1v1h-1zM345 116h1v1h-1zM345 131h1v1h-1zM345 319h1v1h-1zM345 351h1v1h-1zM345 357h1v1h-1zM345 383h1v1h-1zM346 44h1v1h-1zM346 87h1v1h-1zM346 100h1v1h-1zM346 115h1v1h-1zM346 132h1v1h-1zM346 317h1v2h-1zM346 350h1v1h-1zM346 358h1v1h-1zM346 384h1v1h-1zM346 406h1v1h-1zM347 86h1v1h-1zM347 101h1v1h-1zM347 114h1v1h-1zM347 133h1v2h-1zM347 316h1v1h-1zM347 349h1v1h-1zM347 359h1v1h-1zM347 364h1v1h-1zM347 385h1v2h-1zM348 87h1v1h-1zM348 102h1v1h-1zM348 113h1v1h-1zM348 135h1v1h-1zM348 315h1v1h-1zM348 348h1v1h-1zM348 360h1v1h-1zM348 363h1v1h-1zM348 387h1v1h-1zM349 46h1v1h-1zM349 88h1v1h-1zM349 103h1v1h-1zM349 112h1v1h-1zM349 136h1v1h-1zM349 313h1v2h-1zM349 347h1v1h-1zM349 362h1v1h-1zM349 388h1v2h-1zM349 404h1v1h-1zM350 111h1v1h-1zM350 137h1v2h-1zM350 312h1v1h-1zM350 346h1v1h-1zM350 390h1v1h-1zM351 105h1v1h-1zM351 110h1v1h-1zM351 139h1v1h-1zM351 311h1v1h-1zM351 345h1v1h-1zM351 391h1v1h-1zM352 48h1v1h-1zM352 90h1v1h-1zM352 103h1v1h-1zM352 106h1v1h-1zM352 109h1v1h-1zM352 140h1v2h-1zM352 309h1v2h-1zM352 360h1v1h-1zM352 392h1v2h-1zM352 402h1v1h-1zM353 91h1v1h-1zM353 102h1v1h-1zM353 107h1v1h-1zM353 142h1v2h-1zM353 307h1v2h-1zM353 343h1v1h-1zM353 359h1v1h-1zM353 394h1v1h-1zM354 92h1v1h-1zM354 101h1v1h-1zM354 144h1v1h-1zM354 306h1v1h-1zM354 342h1v1h-1zM354 345h1v1h-1zM354 358h1v1h-1zM354 395h1v1h-1zM355 93h1v1h-1zM355 100h1v1h-1zM355 109h1v1h-1zM355 145h1v1h-1zM355 304h1v2h-1zM355 341h1v1h-1zM355 357h1v1h-1zM355 396h1v2h-1zM356 94h1v1h-1zM356 99h1v1h-1zM356 110h1v1h-1zM356 146h1v2h-1zM356 303h1v1h-1zM356 340h1v1h-1zM356 356h1v1h-1zM356 398h1v1h-1zM357 95h1v1h-1zM357 98h1v1h-1zM357 111h1v1h-1zM357 148h1v1h-1zM357 302h1v1h-1zM357 339h1v1h-1zM357 347h1v1h-1zM357 355h1v1h-1zM358 96h1v1h-1zM358 112h1v1h-1zM358 149h1v1h-1zM358 300h1v2h-1zM358 338h1v1h-1zM358 348h1v1h-1zM358 354h1v1h-1zM359 52h1v1h-1zM359 113h1v1h-1zM359 150h1v2h-1zM359 299h1v1h-1zM359 337h1v1h-1zM359 353h1v1h-1zM359 398h1v1h-1zM360 98h1v1h-1zM360 114h1v1h-1zM360 152h1v2h-1zM360 297h1v2h-1zM360 335h1v2h-1zM360 352h1v1h-1zM361 99h1v1h-1zM361 116h1v1h-1zM361 154h1v2h-1zM361 295h1v2h-1zM361 334h1v1h-1zM361 351h1v1h-1zM362 54h1v1h-1zM362 100h1v1h-1zM362 114h1v1h-1zM362 117h1v1h-1zM362 156h1v2h-1zM362 293h1v2h-1zM362 396h1v1h-1zM363 101h1v1h-1zM363 118h1v1h-1zM363 158h1v1h-1zM363 291h1v2h-1zM363 332h1v1h-1zM363 349h1v1h-1zM364 102h1v1h-1zM364 119h1v1h-1zM364 159h1v2h-1zM364 290h1v1h-1zM364 331h1v1h-1zM364 334h1v1h-1zM364 348h1v1h-1zM365 56h1v1h-1zM365 103h1v1h-1zM365 112h1v1h-1zM365 120h1v1h-1zM365 161h1v2h-1zM365 288h1v2h-1zM365 330h1v1h-1zM365 347h1v1h-1zM365 394h1v1h-1zM366 57h1v1h-1zM366 104h1v1h-1zM366 111h1v1h-1zM366 121h1v1h-1zM366 164h1v1h-1zM366 286h1v2h-1zM366 329h1v1h-1zM366 346h1v1h-1zM366 393h1v1h-1zM367 58h1v1h-1zM367 105h1v1h-1zM367 122h1v1h-1zM367 165h1v3h-1zM367 283h1v3h-1zM367 328h1v1h-1zM367 336h1v1h-1zM367 345h1v1h-1zM367 392h1v1h-1zM368 106h1v1h-1zM368 123h1v2h-1zM368 168h1v2h-1zM368 281h1v2h-1zM368 326h1v2h-1zM368 337h1v1h-1zM368 344h1v1h-1zM369 107h1v1h-1zM369 109h1v1h-1zM369 125h1v1h-1zM369 170h1v2h-1zM369 278h1v3h-1zM369 325h1v1h-1zM369 343h1v1h-1zM370 60h1v1h-1zM370 108h1v1h-1zM370 126h1v1h-1zM370 172h1v2h-1zM370 276h1v2h-1zM370 324h1v1h-1zM370 342h1v1h-1zM370 390h1v1h-1zM371 61h1v1h-1zM371 109h1v1h-1zM371 127h1v2h-1zM371 174h1v3h-1zM371 274h1v2h-1zM371 322h1v2h-1zM371 339h1v1h-1zM371 341h1v1h-1zM371 389h1v1h-1zM372 62h1v1h-1zM372 110h1v1h-1zM372 126h1v1h-1zM372 129h1v2h-1zM372 177h1v2h-1zM372 272h1v2h-1zM372 320h1v1h-1zM372 340h1v1h-1zM372 388h1v1h-1zM373 63h1v1h-1zM373 111h1v2h-1zM373 131h1v1h-1zM373 179h1v4h-1zM373 268h1v4h-1zM373 319h1v1h-1zM373 338h1v2h-1zM373 387h1v1h-1zM374 64h1v1h-1zM374 113h1v1h-1zM374 132h1v1h-1zM374 183h1v4h-1zM374 264h1v4h-1zM374 318h1v1h-1zM374 337h1v1h-1zM374 386h1v1h-1zM375 65h1v1h-1zM375 114h1v1h-1zM375 124h1v1h-1zM375 133h1v2h-1zM375 187h1v2h-1zM375 262h1v2h-1zM375 316h1v2h-1zM375 336h1v1h-1zM375 385h1v1h-1zM376 66h1v1h-1zM376 115h1v1h-1zM376 123h1v1h-1zM376 135h1v1h-1zM376 189h1v4h-1zM376 258h1v4h-1zM376 315h1v1h-1zM376 323h1v1h-1zM376 335h1v1h-1zM376 384h1v1h-1zM377 67h1v1h-1zM377 116h1v2h-1zM377 136h1v1h-1zM377 193h1v5h-1zM377 253h1v5h-1zM377 314h1v1h-1zM377 333h1v2h-1zM377 383h1v1h-1zM378 68h1v1h-1zM378 118h1v1h-1zM378 137h1v2h-1zM378 198h1v5h-1zM378 248h1v5h-1zM378 312h1v2h-1zM378 332h1v1h-1zM378 382h1v1h-1zM379 119h1v1h-1zM379 139h1v2h-1zM379 203h1v10h-1zM379 238h1v10h-1zM379 310h1v2h-1zM379 330h1v2h-1zM380 120h1v1h-1zM380 141h1v1h-1zM380 213h1v12h-1zM380 226h1v12h-1zM380 309h1v1h-1zM380 328h1v2h-1zM381 70h1v1h-1zM381 122h1v2h-1zM381 142h1v2h-1zM381 307h1v2h-1zM381 326h1v2h-1zM381 380h1v1h-1zM382 71h1v1h-1zM382 124h1v2h-1zM382 144h1v2h-1zM382 305h1v2h-1zM382 325h1v1h-1zM382 379h1v1h-1zM383 72h1v1h-1zM383 118h1v1h-1zM383 126h1v1h-1zM383 146h1v2h-1zM383 303h1v2h-1zM383 324h1v1h-1zM383 378h1v1h-1zM384 73h1v1h-1zM384 127h1v2h-1zM384 148h1v2h-1zM384 301h1v2h-1zM384 310h1v1h-1zM384 322h1v2h-1zM384 377h1v1h-1zM385 74h1v1h-1zM385 129h1v1h-1zM385 150h1v2h-1zM385 298h1v3h-1zM385 321h1v1h-1zM385 376h1v1h-1zM386 75h1v1h-1zM386 116h1v1h-1zM386 130h1v1h-1zM386 153h1v1h-1zM386 296h1v2h-1zM386 320h1v1h-1zM386 375h1v1h-1zM387 76h1v1h-1zM387 131h1v2h-1zM387 155h1v1h-1zM387 294h1v1h-1zM387 318h1v2h-1zM387 374h1v1h-1zM388 77h1v1h-1zM388 133h1v2h-1zM388 156h1v3h-1zM388 292h1v2h-1zM388 316h1v2h-1zM388 373h1v1h-1zM389 78h1v1h-1zM389 114h1v1h-1zM389 135h1v1h-1zM389 159h1v2h-1zM389 290h1v2h-1zM389 314h1v2h-1zM389 372h1v1h-1zM390 79h1v1h-1zM390 136h1v2h-1zM390 161h1v2h-1zM390 287h1v3h-1zM390 312h1v1h-1zM390 371h1v1h-1zM391 80h1v1h-1zM391 138h1v2h-1zM391 163h1v2h-1zM391 285h1v2h-1zM391 310h1v2h-1zM391 370h1v1h-1zM392 81h1v1h-1zM392 112h1v1h-1zM392 140h1v2h-1zM392 165h1v1h-1zM392 283h1v2h-1zM392 309h1v1h-1zM392 369h1v1h-1zM393 82h1v1h-1zM393 142h1v2h-1zM393 167h1v3h-1zM393 282h1v1h-1zM393 307h1v2h-1zM393 368h1v1h-1zM394 83h1v1h-1zM394 144h1v2h-1zM394 170h1v2h-1zM394 279h1v2h-1zM394 305h1v2h-1zM394 367h1v1h-1zM395 84h1v1h-1zM395 110h1v1h-1zM395 146h1v1h-1zM395 172h1v4h-1zM395 274h1v5h-1zM395 303h1v2h-1zM395 365h1v2h-1zM396 85h1v2h-1zM396 147h1v1h-1zM396 176h1v4h-1zM396 270h1v4h-1zM396 301h1v2h-1zM396 364h1v1h-1zM397 87h1v1h-1zM397 149h1v2h-1zM397 181h1v2h-1zM397 268h1v2h-1zM397 363h1v1h-1zM398 88h1v1h-1zM398 108h1v1h-1zM398 151h1v2h-1zM398 183h1v4h-1zM398 263h1v4h-1zM398 297h1v2h-1zM398 362h1v1h-1zM399 89h1v1h-1zM399 153h1v2h-1zM399 187h1v6h-1zM399 257h1v6h-1zM399 295h1v2h-1zM399 361h1v1h-1zM400 90h1v2h-1zM400 155h1v2h-1zM400 193h1v2h-1zM400 196h1v3h-1zM400 251h1v2h-1zM400 254h1v3h-1zM400 293h1v2h-1zM400 359h1v2h-1zM401 92h1v1h-1zM401 106h1v1h-1zM401 157h1v3h-1zM401 199h1v6h-1zM401 245h1v6h-1zM401 291h1v2h-1zM401 358h1v1h-1zM402 93h1v1h-1zM402 160h1v3h-1zM402 205h1v4h-1zM402 210h1v1h-1zM402 239h1v6h-1zM402 288h1v3h-1zM402 357h1v1h-1zM403 94h1v1h-1zM403 164h1v2h-1zM403 211h1v13h-1zM403 226h1v12h-1zM403 286h1v2h-1zM403 356h1v1h-1zM404 95h1v1h-1zM404 104h1v1h-1zM404 166h1v3h-1zM404 282h1v3h-1zM404 354h1v2h-1zM405 96h1v2h-1zM405 169h1v3h-1zM405 279h1v3h-1zM405 353h1v1h-1zM406 98h1v1h-1zM406 172h1v3h-1zM406 276h1v3h-1zM406 352h1v1h-1zM407 99h1v1h-1zM407 102h1v1h-1zM407 175h1v2h-1zM407 273h1v3h-1zM407 351h1v1h-1zM408 100h1v2h-1zM408 178h1v3h-1zM408 271h1v2h-1zM408 349h1v2h-1zM409 102h1v2h-1zM409 181h1v4h-1zM409 265h1v5h-1zM409 347h1v2h-1zM410 104h1v2h-1zM410 185h1v6h-1zM410 259h1v6h-1zM410 345h1v2h-1zM411 106h1v1h-1zM411 191h1v2h-1zM411 194h1v3h-1zM411 253h1v1h-1zM411 255h1v4h-1zM411 344h1v1h-1zM412 107h1v1h-1zM412 197h1v7h-1zM412 247h1v6h-1zM412 343h1v1h-1zM413 108h1v1h-1zM413 204h1v4h-1zM413 209h1v1h-1zM413 240h1v7h-1zM413 341h1v2h-1zM414 109h1v2h-1zM414 210h1v14h-1zM414 225h1v14h-1zM414 340h1v1h-1zM415 111h1v1h-1zM415 339h1v1h-1zM416 112h1v1h-1zM416 338h1v1h-1zM417 113h1v2h-1zM417 336h1v2h-1zM418 115h1v1h-1zM418 335h1v1h-1zM419 116h1v2h-1zM419 333h1v2h-1zM420 118h1v2h-1zM420 331h1v2h-1zM421 120h1v2h-1zM421 329h1v2h-1zM422 122h1v2h-1zM422 327h1v2h-1zM423 124h1v2h-1zM423 325h1v2h-1zM424 126h1v2h-1zM424 323h1v2h-1zM425 128h1v1h-1zM425 322h1v1h-1zM426 129h1v2h-1zM426 320h1v2h-1zM427 131h1v2h-1zM427 318h1v2h-1zM428 133h1v2h-1zM428 316h1v2h-1zM429 135h1v2h-1zM429 314h1v2h-1zM430 137h1v3h-1zM430 311h1v3h-1zM431 140h1v2h-1zM431 309h1v2h-1zM432 142h1v2h-1zM432 307h1v2h-1zM433 144h1v3h-1zM433 304h1v3h-1zM434 147h1v2h-1zM434 302h1v2h-1zM435 149h1v2h-1zM435 300h1v2h-1zM436 151h1v3h-1zM436 297h1v3h-1zM437 154h1v4h-1zM437 293h1v4h-1zM438 158h1v3h-1zM438 290h1v3h-1zM439 161h1v4h-1zM439 286h1v4h-1zM440 165h1v3h-1zM440 282h1v4h-1zM441 168h1v4h-1zM441 278h1v4h-1zM442 172h1v4h-1zM442 275h1v3h-1zM443 176h1v4h-1zM443 271h1v4h-1zM444 180h1v3h-1zM444 268h1v3h-1zM445 183h1v4h-1zM445 264h1v4h-1zM446 187h1v5h-1zM446 258h1v6h-1zM447 192h1v8h-1zM447 251h1v7h-1zM448 200h1v5h-1zM448 206h1v9h-1zM448 236h1v15h-1zM449 215h1v21h-1z"/>
<path fill="#bfbfbf" d="M0 0h622v1h-622zM0 225h11v1h-11zM12 225h34v1h-34zM47 225h10v1h-10zM81 225h93v1h-93zM175 225h55v1h-55zM231 225h69v1h-69zM301 225h79v1h-79zM404 225h10v1h-10zM415 225h34v1h-34zM450 225h10v1h-10zM0 452h622v1h-622zM0 1h1v224h-1zM0 226h1v226h-1zM127 425h1v1h-1zM128 423h1v2h-1zM129 421h1v2h-1zM130 419h1v2h-1zM131 417h1v2h-1zM132 415h1v1h-1zM133 413h1v2h-1zM134 411h1v2h-1zM135 409h1v2h-1zM136 407h1v2h-1zM137 405h1v2h-1zM138 403h1v2h-1zM139 401h1v2h-1zM140 399h1v2h-1zM141 397h1v2h-1zM142 395h1v2h-1zM143 393h1v2h-1zM144 392h1v1h-1zM145 390h1v2h-1zM146 388h1v2h-1zM147 387h1v1h-1zM148 384h1v2h-1zM149 382h1v2h-1zM150 380h1v2h-1zM151 378h1v2h-1zM152 377h1v1h-1zM153 374h1v1h-1zM154 372h1v1h-1zM155 370h1v1h-1zM156 368h1v1h-1zM157 366h1v1h-1zM158 364h1v1h-1zM159 362h1v1h-1zM160 360h1v1h-1zM164 353h1v2h-1zM165 351h1v2h-1zM166 349h1v2h-1zM167 347h1v2h-1zM168 345h1v2h-1zM169 343h1v2h-1zM170 341h1v2h-1zM171 339h1v2h-1zM172 337h1v2h-1zM173 335h1v2h-1zM174 333h1v2h-1zM175 331h1v2h-1zM176 329h1v2h-1zM177 327h1v2h-1zM178 325h1v2h-1zM179 324h1v1h-1zM180 322h1v2h-1zM181 320h1v2h-1zM182 318h1v2h-1zM183 316h1v2h-1zM184 314h1v2h-1zM185 312h1v2h-1zM186 310h1v2h-1zM187 308h1v2h-1zM188 306h1v2h-1zM189 304h1v2h-1zM190 302h1v2h-1zM191 300h1v2h-1zM192 298h1v2h-1zM193 296h1v2h-1zM194 294h1v2h-1zM195 292h1v2h-1zM197 289h1v2h-1zM198 287h1v2h-1zM199 285h1v2h-1zM200 283h1v2h-1zM201 281h1v2h-1zM202 279h1v2h-1zM203 277h1v2h-1zM204 275h1v2h-1zM205 273h1v2h-1zM206 271h1v2h-1zM207 269h1v2h-1zM208 267h1v2h-1zM209 265h1v2h-1zM210 263h1v2h-1zM211 261h1v2h-1zM212 259h1v2h-1zM213 258h1v1h-1zM214 256h1v2h-1zM215 254h1v2h-1zM216 252h1v2h-1zM217 250h1v2h-1zM218 248h1v2h-1zM219 246h1v2h-1zM220 244h1v2h-1zM221 242h1v2h-1zM222 240h1v2h-1zM223 238h1v2h-1zM224 236h1v2h-1zM225 234h1v2h-1zM226 232h1v2h-1zM227 230h1v2h-1zM228 228h1v2h-1zM229 226h1v2h-1zM231 223h1v2h-1zM232 221h1v2h-1zM233 219h1v2h-1zM234 217h1v2h-1zM235 215h1v2h-1zM236 213h1v2h-1zM237 211h1v2h-1zM238 209h1v2h-1zM239 207h1v2h-1zM240 205h1v2h-1zM241 203h1v2h-1zM242 201h1v2h-1zM243 199h1v2h-1zM244 197h1v2h-1zM245 195h1v2h-1zM246 193h1v2h-1zM247 192h1v1h-1zM248 190h1v2h-1zM249 188h1v2h-1zM250 186h1v2h-1zM251 184h1v2h-1zM252 182h1v2h-1zM253 180h1v2h-1zM254 178h1v2h-1zM255 176h1v2h-1zM256 174h1v2h-1zM257 173h1v1h-1zM258 170h1v2h-1zM259 168h1v2h-1zM260 166h1v2h-1zM261 164h1v2h-1zM262 162h1v2h-1zM263 160h1v2h-1zM264 159h1v1h-1zM265 157h1v2h-1zM266 155h1v2h-1zM267 153h1v2h-1zM268 151h1v2h-1zM269 149h1v2h-1zM270 147h1v2h-1zM271 145h1v2h-1zM272 143h1v2h-1zM273 141h1v2h-1zM274 139h1v2h-1zM275 137h1v2h-1zM276 135h1v2h-1zM277 133h1v2h-1zM278 131h1v2h-1zM279 130h1v1h-1zM280 127h1v2h-1zM281 125h1v2h-1zM282 124h1v1h-1zM283 122h1v2h-1zM284 120h1v2h-1zM285 118h1v2h-1zM286 116h1v2h-1zM287 114h1v2h-1zM288 112h1v2h-1zM289 110h1v2h-1zM290 108h1v2h-1zM291 106h1v2h-1zM292 104h1v2h-1zM294 100h1v2h-1zM295 98h1v2h-1zM296 96h1v2h-1zM300 90h1v1h-1zM301 88h1v1h-1zM302 86h1v1h-1zM303 84h1v1h-1zM304 82h1v1h-1zM305 80h1v1h-1zM306 78h1v1h-1zM307 76h1v1h-1zM308 73h1v1h-1zM309 71h1v2h-1zM310 69h1v2h-1zM311 67h1v2h-1zM312 65h1v2h-1zM313 63h1v2h-1zM314 61h1v2h-1zM315 59h1v2h-1zM316 58h1v1h-1zM317 56h1v2h-1zM318 54h1v2h-1zM319 52h1v2h-1zM320 50h1v2h-1zM321 48h1v2h-1zM322 46h1v2h-1zM323 44h1v2h-1zM324 42h1v2h-1zM325 40h1v2h-1zM326 38h1v2h-1zM327 36h1v2h-1zM328 35h1v1h-1zM329 32h1v2h-1zM330 30h1v2h-1zM331 28h1v2h-1zM332 26h1v2h-1zM333 25h1v1h-1zM461 1h1v451h-1zM621 1h1v451h-1z"/>
<path fill="#7f7f7f" d="M359 101h2v1h-2zM355 104h2v1h-2zM359 105h2v1h-2zM101 106h2v1h-2zM361 107h2v1h-2zM99 108h2v1h-2zM363 109h2v1h-2zM97 110h2v1h-2zM93 111h2v1h-2zM369 112h2v1h-2zM97 114h2v1h-2zM365 115h2v1h-2zM371 115h2v1h-2zM89 116h2v1h-2zM373 117h2v1h-2zM87 118h2v1h-2zM367 118h2v1h-2zM93 119h2v1h-2zM84 120h2v1h-2zM369 120h2v1h-2zM375 120h2v1h-2zM91 121h2v1h-2zM373 121h2v1h-2zM87 122h2v1h-2zM83 123h2v1h-2zM89 123h2v1h-2zM370 123h2v1h-2zM379 125h2v1h-2zM87 126h2v1h-2zM377 126h2v1h-2zM78 127h2v1h-2zM381 127h2v1h-2zM374 128h2v1h-2zM81 129h2v1h-2zM378 129h2v1h-2zM77 130h2v1h-2zM382 130h2v1h-2zM84 131h2v1h-2zM375 131h2v1h-2zM380 131h2v1h-2zM80 132h2v1h-2zM75 133h2v1h-2zM82 133h2v1h-2zM377 133h2v1h-2zM384 133h2v1h-2zM77 134h2v1h-2zM382 134h2v1h-2zM73 135h2v1h-2zM79 135h2v1h-2zM380 135h2v1h-2zM75 136h2v1h-2zM81 136h2v1h-2zM378 136h2v1h-2zM77 137h2v1h-2zM79 138h2v1h-2zM387 138h2v1h-2zM385 139h2v1h-2zM69 140h2v1h-2zM390 140h2v1h-2zM71 141h2v1h-2zM382 141h2v1h-2zM388 141h2v1h-2zM73 142h2v1h-2zM386 142h2v1h-2zM69 143h2v1h-2zM75 143h2v1h-2zM384 143h2v1h-2zM390 143h2v1h-2zM71 144h2v1h-2zM388 144h2v1h-2zM73 145h2v1h-2zM386 145h2v1h-2zM67 146h2v1h-2zM75 146h2v1h-2zM384 146h2v1h-2zM392 146h2v1h-2zM69 147h2v1h-2zM390 147h2v1h-2zM65 148h2v1h-2zM71 148h2v1h-2zM388 148h2v1h-2zM67 149h2v1h-2zM73 149h2v1h-2zM386 149h2v1h-2zM69 150h2v1h-2zM71 151h2v1h-2zM396 151h2v1h-2zM394 152h2v1h-2zM391 153h3v1h-3zM62 154h2v1h-2zM389 154h2v1h-2zM397 154h2v1h-2zM64 155h2v1h-2zM395 155h2v1h-2zM66 156h2v1h-2zM393 156h2v1h-2zM61 157h2v1h-2zM68 157h2v1h-2zM391 157h2v1h-2zM398 157h2v1h-2zM63 158h2v1h-2zM70 158h2v1h-2zM389 158h2v1h-2zM396 158h2v1h-2zM65 159h2v1h-2zM394 159h2v1h-2zM60 160h2v1h-2zM67 160h2v1h-2zM392 160h2v1h-2zM399 160h2v1h-2zM62 161h3v1h-3zM396 161h3v1h-3zM65 162h3v1h-3zM393 162h3v1h-3zM58 163h2v1h-2zM60 164h3v1h-3zM63 165h4v1h-4zM400 166h2v1h-2zM397 167h3v1h-3zM395 168h2v1h-2zM58 169h2v1h-2zM401 169h2v1h-2zM60 170h3v1h-3zM398 170h3v1h-3zM63 171h2v1h-2zM396 171h2v1h-2zM57 172h3v1h-3zM400 172h4v1h-4zM60 173h4v1h-4zM397 173h3v1h-3zM56 175h3v1h-3zM401 175h4v1h-4zM59 176h4v1h-4zM398 176h3v1h-3zM55 178h3v1h-3zM58 179h4v1h-4zM62 180h2v1h-2zM350 180h2v1h-2zM406 180h2v1h-2zM348 181h2v1h-2zM403 181h3v1h-3zM346 182h2v1h-2zM400 182h3v1h-3zM344 183h2v1h-2zM52 184h3v1h-3zM342 184h2v1h-2zM406 184h3v1h-3zM55 185h5v1h-5zM401 185h5v1h-5zM60 186h2v1h-2zM399 186h2v1h-2zM51 187h3v1h-3zM407 187h3v1h-3zM54 188h5v1h-5zM402 188h5v1h-5zM59 189h2v1h-2zM400 189h2v1h-2zM51 190h2v1h-2zM408 190h2v1h-2zM53 191h5v1h-5zM403 191h5v1h-5zM58 192h3v1h-3zM400 192h3v1h-3zM50 193h3v1h-3zM53 194h5v1h-5zM58 195h2v1h-2zM406 196h5v1h-5zM401 197h5v1h-5zM49 199h5v1h-5zM406 199h6v1h-6zM54 200h5v1h-5zM402 200h4v1h-4zM49 202h4v1h-4zM407 202h5v1h-5zM53 203h6v1h-6zM402 203h5v1h-5zM48 205h5v1h-5zM407 205h6v1h-6zM53 206h5v1h-5zM403 206h4v1h-4zM48 208h5v1h-5zM53 209h5v1h-5zM408 211h6v1h-6zM404 212h4v1h-4zM349 213h10v1h-10zM47 215h10v1h-10zM404 215h10v1h-10zM47 218h10v1h-10zM404 218h10v1h-10zM47 221h10v1h-10zM404 221h10v1h-10zM229 223h2v1h-2zM47 224h10v1h-10zM404 226h10v1h-10zM230 227h2v1h-2zM47 229h10v1h-10zM404 229h10v1h-10zM47 232h10v1h-10zM404 232h10v1h-10zM47 235h10v1h-10zM404 235h10v1h-10zM52 238h5v1h-5zM47 239h5v1h-5zM403 241h4v1h-4zM407 242h6v1h-6zM53 244h5v1h-5zM403 244h4v1h-4zM48 245h5v1h-5zM407 245h6v1h-6zM53 247h6v1h-6zM402 247h5v1h-5zM49 248h4v1h-4zM407 248h5v1h-5zM54 250h5v1h-5zM402 250h4v1h-4zM49 251h5v1h-5zM406 251h6v1h-6zM54 253h6v1h-6zM50 254h4v1h-4zM401 255h2v1h-2zM403 256h5v1h-5zM408 257h3v1h-3zM58 258h3v1h-3zM400 258h3v1h-3zM53 259h5v1h-5zM403 259h5v1h-5zM51 260h2v1h-2zM408 260h2v1h-2zM59 261h2v1h-2zM400 261h2v1h-2zM54 262h5v1h-5zM402 262h5v1h-5zM51 263h3v1h-3zM407 263h3v1h-3zM60 264h2v1h-2zM399 264h2v1h-2zM55 265h5v1h-5zM401 265h5v1h-5zM52 266h3v1h-3zM406 266h3v1h-3zM58 268h3v1h-3zM55 269h3v1h-3zM53 270h2v1h-2zM397 270h2v1h-2zM399 271h3v1h-3zM402 272h4v1h-4zM59 274h4v1h-4zM398 274h3v1h-3zM56 275h3v1h-3zM401 275h4v1h-4zM60 277h4v1h-4zM397 277h3v1h-3zM57 278h3v1h-3zM400 278h4v1h-4zM63 279h2v1h-2zM396 279h2v1h-2zM60 280h3v1h-3zM398 280h3v1h-3zM58 281h2v1h-2zM401 281h2v1h-2zM64 282h2v1h-2zM61 283h3v1h-3zM59 284h2v1h-2zM394 285h3v1h-3zM397 286h4v1h-4zM68 287h2v1h-2zM391 287h2v1h-2zM401 287h2v1h-2zM65 288h3v1h-3zM393 288h3v1h-3zM62 289h3v1h-3zM396 289h3v1h-3zM60 290h2v1h-2zM67 290h2v1h-2zM392 290h2v1h-2zM399 290h2v1h-2zM65 291h2v1h-2zM394 291h2v1h-2zM63 292h2v1h-2zM70 292h2v1h-2zM389 292h2v1h-2zM396 292h2v1h-2zM61 293h2v1h-2zM68 293h2v1h-2zM391 293h2v1h-2zM398 293h2v1h-2zM66 294h2v1h-2zM393 294h2v1h-2zM64 295h2v1h-2zM395 295h2v1h-2zM62 296h2v1h-2zM70 296h2v1h-2zM397 296h2v1h-2zM67 297h3v1h-3zM65 298h2v1h-2zM386 298h2v1h-2zM388 299h2v1h-2zM390 300h2v1h-2zM73 301h2v1h-2zM386 301h2v1h-2zM392 301h2v1h-2zM71 302h2v1h-2zM388 302h2v1h-2zM394 302h2v1h-2zM69 303h2v1h-2zM390 303h2v1h-2zM67 304h2v1h-2zM75 304h2v1h-2zM384 304h2v1h-2zM392 304h2v1h-2zM73 305h2v1h-2zM386 305h2v1h-2zM71 306h2v1h-2zM388 306h2v1h-2zM69 307h2v1h-2zM75 307h2v1h-2zM384 307h2v1h-2zM390 307h2v1h-2zM73 308h2v1h-2zM386 308h2v1h-2zM71 309h2v1h-2zM77 309h2v1h-2zM388 309h2v1h-2zM75 310h2v1h-2zM72 312h2v1h-2zM380 312h2v1h-2zM382 313h2v1h-2zM81 314h2v1h-2zM378 314h2v1h-2zM384 314h2v1h-2zM79 315h2v1h-2zM380 315h2v1h-2zM386 315h2v1h-2zM77 316h2v1h-2zM382 316h2v1h-2zM75 317h2v1h-2zM82 317h2v1h-2zM377 317h2v1h-2zM384 317h2v1h-2zM80 318h2v1h-2zM84 319h2v1h-2zM375 319h2v1h-2zM380 319h2v1h-2zM77 320h2v1h-2zM382 320h2v1h-2zM81 321h2v1h-2zM378 321h2v1h-2zM85 322h2v1h-2zM78 323h2v1h-2zM83 323h2v1h-2zM381 323h2v1h-2zM80 325h2v1h-2zM373 325h2v1h-2zM89 327h2v1h-2zM370 327h2v1h-2zM87 328h2v1h-2zM377 328h2v1h-2zM91 329h2v1h-2zM373 329h2v1h-2zM84 330h2v1h-2zM369 330h2v1h-2zM375 330h2v1h-2zM93 331h2v1h-2zM87 332h2v1h-2zM367 332h2v1h-2zM373 333h2v1h-2zM89 334h2v1h-2zM95 334h2v1h-2zM371 335h2v1h-2zM91 337h2v1h-2zM363 337h2v1h-2zM97 340h2v1h-2zM367 340h2v1h-2zM363 341h2v1h-2zM99 342h2v1h-2zM361 343h2v1h-2zM101 344h2v1h-2zM105 345h2v1h-2zM359 345h2v1h-2zM101 348h2v1h-2zM54 177h1v1h-1zM55 174h1v1h-1zM55 276h1v1h-1zM56 171h1v1h-1zM56 279h1v1h-1zM57 168h1v1h-1zM57 282h1v1h-1zM58 285h1v1h-1zM61 267h1v1h-1zM63 177h1v1h-1zM63 273h1v1h-1zM64 174h1v1h-1zM64 276h1v1h-1zM64 299h1v1h-1zM66 172h1v1h-1zM66 278h1v1h-1zM66 281h1v1h-1zM67 166h1v1h-1zM68 142h1v1h-1zM68 163h1v1h-1zM68 308h1v1h-1zM69 161h1v1h-1zM69 289h1v1h-1zM70 310h1v1h-1zM71 313h1v1h-1zM72 295h1v1h-1zM73 152h1v1h-1zM74 132h1v1h-1zM74 311h1v1h-1zM74 318h1v1h-1zM76 129h1v1h-1zM76 321h1v1h-1zM77 144h1v1h-1zM77 306h1v1h-1zM79 131h1v1h-1zM79 319h1v1h-1zM80 128h1v1h-1zM80 322h1v1h-1zM81 121h1v1h-1zM82 122h1v1h-1zM82 324h1v1h-1zM83 119h1v1h-1zM83 130h1v1h-1zM83 137h1v1h-1zM83 313h1v1h-1zM83 320h1v1h-1zM83 331h1v1h-1zM84 134h1v1h-1zM84 316h1v1h-1zM85 116h1v1h-1zM85 124h1v1h-1zM85 334h1v1h-1zM86 117h1v1h-1zM86 121h1v1h-1zM86 125h1v1h-1zM86 329h1v1h-1zM86 333h1v1h-1zM87 114h1v1h-1zM87 321h1v1h-1zM87 336h1v1h-1zM88 115h1v1h-1zM88 335h1v1h-1zM89 119h1v1h-1zM89 331h1v1h-1zM89 339h1v1h-1zM90 120h1v1h-1zM90 330h1v1h-1zM90 338h1v1h-1zM91 109h1v1h-1zM91 117h1v1h-1zM91 124h1v1h-1zM91 326h1v1h-1zM91 333h1v1h-1zM92 110h1v1h-1zM92 118h1v1h-1zM92 332h1v1h-1zM93 106h1v1h-1zM93 336h1v1h-1zM93 344h1v1h-1zM94 107h1v1h-1zM94 335h1v1h-1zM94 343h1v1h-1zM95 104h1v1h-1zM95 108h1v1h-1zM95 112h1v1h-1zM95 342h1v1h-1zM95 346h1v1h-1zM96 105h1v1h-1zM96 109h1v1h-1zM96 113h1v1h-1zM96 286h1v1h-1zM96 341h1v1h-1zM96 345h1v1h-1zM97 102h1v1h-1zM97 106h1v1h-1zM97 333h1v1h-1zM97 344h1v1h-1zM97 348h1v1h-1zM98 103h1v1h-1zM98 107h1v1h-1zM98 285h1v1h-1zM98 343h1v1h-1zM98 347h1v1h-1zM99 104h1v1h-1zM99 111h1v1h-1zM99 115h1v1h-1zM99 339h1v1h-1zM99 346h1v1h-1zM99 350h1v1h-1zM100 105h1v1h-1zM100 112h1v1h-1zM100 284h1v1h-1zM100 338h1v1h-1zM100 345h1v1h-1zM100 349h1v1h-1zM101 109h1v1h-1zM101 341h1v1h-1zM102 97h1v1h-1zM102 110h1v1h-1zM102 283h1v1h-1zM102 340h1v1h-1zM103 98h1v1h-1zM103 107h1v1h-1zM103 343h1v1h-1zM103 347h1v1h-1zM104 95h1v1h-1zM104 99h1v1h-1zM104 108h1v1h-1zM104 282h1v1h-1zM104 342h1v1h-1zM104 346h1v1h-1zM104 355h1v1h-1zM105 96h1v1h-1zM105 100h1v1h-1zM105 354h1v1h-1zM106 93h1v1h-1zM106 97h1v1h-1zM106 101h1v1h-1zM106 281h1v1h-1zM106 353h1v1h-1zM106 357h1v1h-1zM107 94h1v1h-1zM107 98h1v1h-1zM107 102h1v1h-1zM107 344h1v1h-1zM107 352h1v1h-1zM107 356h1v1h-1zM108 95h1v1h-1zM108 99h1v1h-1zM108 103h1v1h-1zM108 280h1v1h-1zM108 351h1v1h-1zM108 355h1v1h-1zM109 91h1v1h-1zM109 96h1v1h-1zM109 100h1v1h-1zM109 104h1v1h-1zM109 350h1v1h-1zM109 354h1v1h-1zM109 359h1v1h-1zM110 92h1v1h-1zM110 97h1v1h-1zM110 101h1v1h-1zM110 279h1v1h-1zM110 349h1v1h-1zM110 353h1v1h-1zM110 358h1v1h-1zM111 93h1v1h-1zM111 98h1v1h-1zM111 102h1v1h-1zM111 348h1v1h-1zM111 352h1v1h-1zM111 357h1v1h-1zM111 361h1v1h-1zM112 94h1v1h-1zM112 99h1v1h-1zM112 278h1v1h-1zM112 351h1v1h-1zM112 356h1v1h-1zM112 360h1v1h-1zM113 95h1v1h-1zM113 100h1v1h-1zM113 350h1v1h-1zM113 355h1v1h-1zM113 359h1v1h-1zM114 87h1v1h-1zM114 96h1v1h-1zM114 277h1v1h-1zM114 354h1v1h-1zM114 358h1v1h-1zM115 88h1v1h-1zM115 97h1v1h-1zM115 353h1v1h-1zM115 357h1v1h-1zM116 85h1v1h-1zM116 89h1v1h-1zM116 277h1v1h-1zM116 356h1v1h-1zM116 365h1v1h-1zM117 86h1v1h-1zM117 90h1v2h-1zM117 355h1v1h-1zM117 363h1v2h-1zM118 87h1v2h-1zM118 92h1v1h-1zM118 276h1v1h-1zM118 354h1v1h-1zM118 362h1v1h-1zM119 83h1v1h-1zM119 89h1v1h-1zM119 93h1v1h-1zM119 361h1v1h-1zM119 367h1v1h-1zM120 84h1v1h-1zM120 90h1v1h-1zM120 94h1v1h-1zM120 275h1v1h-1zM120 359h1v2h-1zM120 365h1v2h-1zM121 81h1v1h-1zM121 85h1v2h-1zM121 91h1v2h-1zM121 358h1v1h-1zM121 364h1v1h-1zM121 369h1v1h-1zM122 82h1v1h-1zM122 87h1v1h-1zM122 93h1v1h-1zM122 274h1v1h-1zM122 357h1v1h-1zM122 363h1v1h-1zM122 367h1v2h-1zM123 83h1v2h-1zM123 88h1v1h-1zM123 361h1v2h-1zM123 366h1v1h-1zM124 85h1v1h-1zM124 89h1v2h-1zM124 273h1v1h-1zM124 325h1v1h-1zM124 360h1v1h-1zM124 365h1v1h-1zM124 371h1v1h-1zM125 86h1v1h-1zM125 363h1v2h-1zM125 369h1v2h-1zM126 87h1v2h-1zM126 272h1v1h-1zM126 323h1v1h-1zM126 362h1v1h-1zM126 368h1v1h-1zM127 78h1v2h-1zM127 89h1v1h-1zM127 361h1v1h-1zM127 367h1v1h-1zM128 80h1v1h-1zM128 271h1v1h-1zM128 321h1v1h-1zM128 365h1v2h-1zM129 76h1v1h-1zM129 81h1v2h-1zM129 364h1v1h-1zM129 374h1v1h-1zM130 77h1v1h-1zM130 83h1v1h-1zM130 270h1v1h-1zM130 319h1v1h-1zM130 372h1v2h-1zM131 78h1v2h-1zM131 84h1v2h-1zM131 371h1v1h-1zM132 74h1v1h-1zM132 80h1v1h-1zM132 269h1v1h-1zM132 318h1v1h-1zM132 370h1v1h-1zM132 376h1v1h-1zM133 75h1v2h-1zM133 81h1v1h-1zM133 368h1v2h-1zM133 374h1v2h-1zM134 72h1v1h-1zM134 77h1v1h-1zM134 82h1v2h-1zM134 268h1v1h-1zM134 316h1v1h-1zM134 367h1v1h-1zM134 372h1v2h-1zM134 378h1v1h-1zM135 73h1v2h-1zM135 78h1v2h-1zM135 371h1v1h-1zM135 376h1v2h-1zM136 75h1v1h-1zM136 80h1v2h-1zM136 267h1v1h-1zM136 314h1v1h-1zM136 369h1v2h-1zM136 375h1v1h-1zM137 76h1v2h-1zM137 82h1v1h-1zM137 368h1v1h-1zM137 373h1v2h-1zM137 379h1v1h-1zM138 78h1v1h-1zM138 267h1v1h-1zM138 312h1v1h-1zM138 372h1v1h-1zM138 377h1v2h-1zM139 79h1v2h-1zM139 370h1v2h-1zM139 375h1v2h-1zM140 69h1v1h-1zM140 266h1v1h-1zM140 310h1v1h-1zM140 374h1v1h-1zM141 70h1v2h-1zM141 372h1v2h-1zM142 72h1v2h-1zM142 265h1v1h-1zM142 308h1v1h-1zM142 371h1v1h-1zM143 68h1v1h-1zM143 74h1v2h-1zM143 382h1v1h-1zM144 69h1v2h-1zM144 76h1v2h-1zM144 264h1v1h-1zM144 306h1v1h-1zM144 380h1v2h-1zM145 71h1v1h-1zM145 107h1v1h-1zM145 378h1v2h-1zM146 66h1v2h-1zM146 72h1v2h-1zM146 109h1v1h-1zM146 263h1v1h-1zM146 304h1v1h-1zM146 377h1v1h-1zM146 383h1v2h-1zM147 68h1v2h-1zM147 74h1v2h-1zM147 375h1v2h-1zM147 381h1v2h-1zM148 70h1v2h-1zM148 76h1v1h-1zM148 262h1v1h-1zM148 302h1v1h-1zM148 374h1v1h-1zM148 379h1v2h-1zM149 65h1v2h-1zM149 72h1v2h-1zM149 113h1v1h-1zM149 377h1v2h-1zM149 384h1v2h-1zM150 67h1v2h-1zM150 74h1v1h-1zM150 261h1v1h-1zM150 301h1v1h-1zM150 376h1v1h-1zM150 382h1v2h-1zM151 69h1v2h-1zM151 380h1v2h-1zM152 71h1v2h-1zM152 260h1v1h-1zM152 299h1v1h-1zM152 378h1v2h-1zM152 385h1v2h-1zM153 73h1v1h-1zM153 377h1v1h-1zM153 383h1v2h-1zM154 62h1v1h-1zM154 259h1v1h-1zM154 297h1v1h-1zM154 381h1v2h-1zM155 63h1v2h-1zM155 121h1v1h-1zM155 379h1v2h-1zM156 65h1v2h-1zM156 123h1v1h-1zM156 258h1v1h-1zM156 295h1v1h-1zM157 61h1v2h-1zM157 67h1v2h-1zM157 388h1v2h-1zM158 63h1v2h-1zM158 69h1v2h-1zM158 125h1v1h-1zM158 258h1v1h-1zM158 293h1v1h-1zM158 386h1v2h-1zM159 65h1v2h-1zM159 127h1v1h-1zM159 384h1v2h-1zM160 59h1v2h-1zM160 67h1v2h-1zM160 257h1v1h-1zM160 291h1v1h-1zM160 382h1v2h-1zM160 390h1v2h-1zM161 61h1v2h-1zM161 69h1v1h-1zM161 129h1v1h-1zM161 381h1v1h-1zM161 388h1v2h-1zM162 63h1v3h-1zM162 131h1v1h-1zM162 256h1v1h-1zM162 289h1v1h-1zM162 385h1v3h-1zM163 58h1v2h-1zM163 66h1v2h-1zM163 383h1v2h-1zM163 391h1v2h-1zM164 60h1v2h-1zM164 68h1v1h-1zM164 133h1v1h-1zM164 255h1v1h-1zM164 287h1v1h-1zM164 382h1v1h-1zM164 389h1v2h-1zM165 62h1v3h-1zM165 135h1v1h-1zM165 386h1v3h-1zM166 65h1v2h-1zM166 137h1v1h-1zM166 254h1v1h-1zM166 285h1v1h-1zM166 384h1v2h-1zM166 392h1v2h-1zM167 67h1v1h-1zM167 383h1v1h-1zM167 390h1v2h-1zM168 139h1v1h-1zM168 253h1v1h-1zM168 284h1v1h-1zM168 388h1v2h-1zM169 56h1v2h-1zM169 141h1v1h-1zM169 386h1v2h-1zM170 58h1v2h-1zM170 252h1v1h-1zM170 282h1v1h-1zM170 385h1v1h-1zM171 60h1v2h-1zM171 143h1v1h-1zM172 55h1v2h-1zM172 62h1v2h-1zM172 145h1v1h-1zM172 251h1v1h-1zM172 280h1v1h-1zM172 394h1v2h-1zM173 57h1v3h-1zM173 64h1v1h-1zM173 391h1v3h-1zM174 60h1v3h-1zM174 147h1v1h-1zM174 250h1v1h-1zM174 278h1v1h-1zM174 388h1v3h-1zM175 54h1v2h-1zM175 63h1v2h-1zM175 149h1v1h-1zM175 386h1v2h-1zM175 395h1v2h-1zM176 56h1v3h-1zM176 249h1v1h-1zM176 276h1v1h-1zM176 391h1v4h-1zM177 59h1v4h-1zM177 151h1v1h-1zM177 388h1v3h-1zM178 54h1v1h-1zM178 63h1v1h-1zM178 153h1v1h-1zM178 248h1v1h-1zM178 274h1v1h-1zM178 387h1v1h-1zM178 396h1v1h-1zM179 55h1v3h-1zM179 155h1v1h-1zM179 392h1v4h-1zM180 58h1v4h-1zM180 248h1v1h-1zM180 272h1v1h-1zM180 389h1v3h-1zM181 62h1v1h-1zM181 388h1v1h-1zM181 397h1v1h-1zM182 159h1v1h-1zM182 247h1v1h-1zM182 270h1v1h-1zM182 393h1v4h-1zM183 390h1v3h-1zM184 52h1v1h-1zM184 161h1v1h-1zM184 246h1v1h-1zM184 268h1v1h-1zM184 388h1v2h-1zM185 53h1v3h-1zM185 163h1v1h-1zM186 56h1v4h-1zM186 245h1v1h-1zM186 267h1v1h-1zM187 60h1v2h-1zM187 165h1v1h-1zM188 51h1v3h-1zM188 167h1v1h-1zM188 244h1v1h-1zM188 265h1v1h-1zM188 397h1v3h-1zM189 54h1v4h-1zM189 393h1v4h-1zM190 58h1v3h-1zM190 169h1v1h-1zM190 243h1v1h-1zM190 263h1v1h-1zM190 390h1v3h-1zM191 50h1v3h-1zM191 171h1v1h-1zM191 398h1v3h-1zM192 53h1v5h-1zM192 173h1v1h-1zM192 242h1v1h-1zM192 261h1v1h-1zM192 393h1v5h-1zM193 58h1v2h-1zM193 391h1v2h-1zM194 50h1v2h-1zM194 175h1v1h-1zM194 241h1v1h-1zM194 259h1v1h-1zM194 399h1v2h-1zM195 52h1v5h-1zM195 177h1v1h-1zM195 394h1v5h-1zM196 57h1v3h-1zM196 240h1v1h-1zM196 257h1v1h-1zM196 391h1v3h-1zM197 179h1v1h-1zM197 399h1v3h-1zM198 181h1v1h-1zM198 239h1v1h-1zM198 255h1v1h-1zM198 394h1v5h-1zM199 392h1v2h-1zM200 49h1v2h-1zM200 183h1v1h-1zM200 239h1v1h-1zM200 253h1v1h-1zM201 51h1v5h-1zM201 185h1v1h-1zM202 56h1v3h-1zM202 238h1v1h-1zM202 251h1v1h-1zM203 48h1v3h-1zM203 187h1v1h-1zM203 400h1v3h-1zM204 51h1v5h-1zM204 189h1v1h-1zM204 237h1v1h-1zM204 250h1v1h-1zM204 395h1v5h-1zM205 56h1v2h-1zM205 191h1v1h-1zM205 393h1v2h-1zM206 236h1v1h-1zM206 248h1v1h-1zM207 48h1v4h-1zM207 193h1v1h-1zM207 398h1v5h-1zM208 52h1v6h-1zM208 195h1v1h-1zM208 235h1v1h-1zM208 246h1v1h-1zM208 393h1v5h-1zM210 47h1v5h-1zM210 197h1v1h-1zM210 234h1v1h-1zM210 244h1v1h-1zM210 398h1v6h-1zM211 52h1v5h-1zM211 199h1v1h-1zM211 394h1v4h-1zM212 233h1v1h-1zM212 242h1v1h-1zM213 201h1v1h-1zM213 399h1v5h-1zM214 203h1v1h-1zM214 232h1v1h-1zM214 240h1v1h-1zM214 394h1v5h-1zM216 46h1v5h-1zM216 205h1v1h-1zM216 231h1v1h-1zM216 238h1v1h-1zM217 51h1v5h-1zM217 207h1v1h-1zM218 209h1v1h-1zM218 230h1v1h-1zM218 236h1v1h-1zM219 46h1v5h-1zM219 399h1v6h-1zM220 51h1v5h-1zM220 211h1v1h-1zM220 230h1v1h-1zM220 234h1v1h-1zM220 395h1v4h-1zM221 213h1v1h-1zM222 46h1v5h-1zM222 229h1v1h-1zM222 233h1v1h-1zM222 399h1v6h-1zM223 51h1v5h-1zM223 215h1v1h-1zM223 395h1v4h-1zM224 217h1v1h-1zM224 228h1v1h-1zM224 231h1v1h-1zM224 359h1v1h-1zM224 361h1v1h-1zM224 363h1v1h-1zM224 365h1v1h-1zM224 367h1v1h-1zM224 369h1v1h-1zM225 335h1v1h-1zM225 337h1v1h-1zM225 339h1v1h-1zM225 341h1v1h-1zM225 343h1v1h-1zM225 345h1v1h-1zM225 347h1v1h-1zM225 349h1v1h-1zM225 351h1v1h-1zM225 353h1v1h-1zM225 355h1v1h-1zM225 357h1v1h-1zM226 46h1v10h-1zM226 219h1v1h-1zM226 227h1v1h-1zM226 229h1v1h-1zM226 313h1v1h-1zM226 315h1v1h-1zM226 317h1v1h-1zM226 319h1v1h-1zM226 321h1v1h-1zM226 323h1v1h-1zM226 325h1v1h-1zM226 327h1v1h-1zM226 329h1v1h-1zM226 331h1v1h-1zM226 333h1v1h-1zM226 395h1v10h-1zM227 221h1v1h-1zM227 287h1v1h-1zM227 289h1v1h-1zM227 291h1v1h-1zM227 293h1v1h-1zM227 295h1v1h-1zM227 297h1v1h-1zM227 299h1v1h-1zM227 301h1v1h-1zM227 303h1v1h-1zM227 305h1v1h-1zM227 307h1v1h-1zM227 309h1v1h-1zM228 226h1v2h-1zM228 263h1v1h-1zM228 265h1v1h-1zM228 267h1v1h-1zM228 269h1v1h-1zM228 271h1v1h-1zM228 273h1v1h-1zM228 275h1v1h-1zM228 277h1v1h-1zM228 279h1v1h-1zM228 281h1v1h-1zM228 283h1v1h-1zM228 285h1v1h-1zM229 239h1v1h-1zM229 241h1v1h-1zM229 243h1v1h-1zM229 245h1v1h-1zM229 247h1v1h-1zM229 249h1v1h-1zM229 251h1v1h-1zM229 253h1v1h-1zM229 255h1v1h-1zM229 257h1v1h-1zM229 259h1v1h-1zM229 261h1v1h-1zM229 395h1v10h-1zM230 213h1v1h-1zM230 215h1v1h-1zM230 217h1v1h-1zM230 219h1v1h-1zM230 221h1v1h-1zM230 225h1v1h-1zM230 229h1v1h-1zM230 231h1v1h-1zM230 233h1v1h-1zM230 235h1v1h-1zM230 237h1v1h-1zM231 46h1v10h-1zM231 189h1v1h-1zM231 191h1v1h-1zM231 193h1v1h-1zM231 195h1v1h-1zM231 197h1v1h-1zM231 199h1v1h-1zM231 201h1v1h-1zM231 203h1v1h-1zM231 205h1v1h-1zM231 207h1v1h-1zM231 209h1v1h-1zM231 211h1v1h-1zM232 167h1v1h-1zM232 169h1v1h-1zM232 171h1v1h-1zM232 173h1v1h-1zM232 175h1v1h-1zM232 177h1v1h-1zM232 179h1v1h-1zM232 181h1v1h-1zM232 183h1v1h-1zM232 185h1v1h-1zM232 187h1v1h-1zM232 223h1v2h-1zM233 141h1v1h-1zM233 143h1v1h-1zM233 145h1v1h-1zM233 147h1v1h-1zM233 149h1v1h-1zM233 151h1v1h-1zM233 153h1v1h-1zM233 155h1v1h-1zM233 157h1v1h-1zM233 159h1v1h-1zM233 161h1v1h-1zM233 163h1v1h-1zM233 229h1v1h-1zM234 46h1v10h-1zM234 117h1v1h-1zM234 119h1v1h-1zM234 121h1v1h-1zM234 123h1v1h-1zM234 125h1v1h-1zM234 127h1v1h-1zM234 129h1v1h-1zM234 131h1v1h-1zM234 133h1v1h-1zM234 135h1v1h-1zM234 139h1v1h-1zM234 221h1v1h-1zM234 223h1v1h-1zM234 231h1v1h-1zM234 395h1v10h-1zM235 93h1v1h-1zM235 95h1v1h-1zM235 97h1v1h-1zM235 99h1v1h-1zM235 101h1v1h-1zM235 103h1v1h-1zM235 105h1v1h-1zM235 107h1v1h-1zM235 109h1v1h-1zM235 111h1v1h-1zM235 113h1v1h-1zM235 115h1v1h-1zM236 81h1v1h-1zM236 83h1v1h-1zM236 85h1v1h-1zM236 87h1v1h-1zM236 89h1v1h-1zM236 91h1v1h-1zM236 219h1v1h-1zM236 222h1v1h-1zM236 233h1v1h-1zM237 51h1v5h-1zM237 235h1v1h-1zM237 395h1v4h-1zM238 46h1v5h-1zM238 217h1v1h-1zM238 221h1v1h-1zM238 399h1v6h-1zM239 237h1v1h-1zM240 51h1v5h-1zM240 216h1v1h-1zM240 220h1v1h-1zM240 239h1v1h-1zM240 395h1v4h-1zM241 46h1v5h-1zM241 399h1v6h-1zM242 214h1v1h-1zM242 220h1v1h-1zM242 241h1v1h-1zM243 243h1v1h-1zM243 395h1v4h-1zM244 212h1v1h-1zM244 219h1v1h-1zM244 245h1v1h-1zM244 399h1v6h-1zM246 52h1v5h-1zM246 210h1v1h-1zM246 218h1v1h-1zM246 247h1v1h-1zM247 47h1v5h-1zM247 249h1v1h-1zM248 208h1v1h-1zM248 217h1v1h-1zM249 52h1v5h-1zM249 251h1v1h-1zM249 394h1v4h-1zM250 47h1v5h-1zM250 206h1v1h-1zM250 216h1v1h-1zM250 253h1v1h-1zM250 398h1v6h-1zM252 52h1v6h-1zM252 204h1v1h-1zM252 215h1v1h-1zM252 255h1v1h-1zM252 393h1v5h-1zM253 48h1v4h-1zM253 257h1v1h-1zM253 398h1v5h-1zM254 202h1v1h-1zM254 214h1v1h-1zM255 56h1v2h-1zM255 259h1v1h-1zM255 393h1v2h-1zM256 51h1v5h-1zM256 200h1v1h-1zM256 213h1v1h-1zM256 261h1v1h-1zM256 395h1v5h-1zM257 48h1v3h-1zM257 263h1v1h-1zM257 400h1v3h-1zM258 199h1v1h-1zM258 212h1v1h-1zM258 392h1v3h-1zM259 265h1v1h-1zM259 395h1v5h-1zM260 197h1v1h-1zM260 211h1v1h-1zM260 267h1v1h-1zM260 400h1v2h-1zM261 57h1v2h-1zM262 52h1v5h-1zM262 195h1v1h-1zM262 211h1v1h-1zM263 49h1v3h-1zM263 271h1v1h-1zM264 57h1v3h-1zM264 193h1v1h-1zM264 210h1v1h-1zM264 391h1v3h-1zM265 52h1v5h-1zM265 273h1v1h-1zM265 394h1v5h-1zM266 50h1v2h-1zM266 191h1v1h-1zM266 209h1v1h-1zM266 275h1v1h-1zM266 399h1v2h-1zM267 58h1v2h-1zM267 391h1v2h-1zM268 53h1v5h-1zM268 189h1v1h-1zM268 208h1v1h-1zM268 277h1v1h-1zM268 393h1v5h-1zM269 50h1v3h-1zM269 279h1v1h-1zM269 398h1v3h-1zM270 58h1v3h-1zM270 187h1v1h-1zM270 207h1v1h-1zM270 281h1v1h-1zM270 390h1v3h-1zM271 54h1v4h-1zM271 393h1v4h-1zM272 51h1v3h-1zM272 185h1v1h-1zM272 206h1v1h-1zM272 283h1v1h-1zM272 397h1v3h-1zM273 285h1v1h-1zM273 389h1v2h-1zM274 183h1v1h-1zM274 205h1v1h-1zM274 391h1v3h-1zM275 287h1v1h-1zM275 394h1v4h-1zM276 61h1v2h-1zM276 182h1v1h-1zM276 204h1v1h-1zM276 289h1v1h-1zM276 398h1v1h-1zM277 57h1v4h-1zM278 54h1v3h-1zM278 180h1v1h-1zM278 203h1v1h-1zM278 291h1v1h-1zM279 53h1v1h-1zM279 62h1v1h-1zM279 293h1v1h-1zM279 388h1v1h-1zM280 58h1v4h-1zM280 178h1v1h-1zM280 202h1v1h-1zM280 389h1v3h-1zM281 55h1v3h-1zM281 295h1v1h-1zM281 392h1v4h-1zM282 54h1v1h-1zM282 63h1v1h-1zM282 176h1v1h-1zM282 202h1v1h-1zM282 297h1v1h-1zM282 387h1v1h-1zM282 396h1v1h-1zM283 59h1v4h-1zM283 299h1v1h-1zM283 388h1v3h-1zM284 56h1v3h-1zM284 174h1v1h-1zM284 201h1v1h-1zM284 391h1v4h-1zM285 54h1v2h-1zM285 63h1v2h-1zM285 301h1v1h-1zM285 386h1v2h-1zM285 395h1v2h-1zM286 60h1v3h-1zM286 172h1v1h-1zM286 200h1v1h-1zM286 303h1v1h-1zM286 388h1v3h-1zM287 57h1v3h-1zM287 386h1v1h-1zM287 391h1v3h-1zM288 55h1v2h-1zM288 170h1v1h-1zM288 199h1v1h-1zM288 305h1v1h-1zM288 387h1v2h-1zM288 394h1v2h-1zM289 307h1v1h-1zM289 389h1v2h-1zM290 65h1v1h-1zM290 168h1v1h-1zM290 198h1v1h-1zM290 391h1v2h-1zM291 63h1v2h-1zM291 309h1v1h-1zM291 393h1v2h-1zM292 61h1v2h-1zM292 166h1v1h-1zM292 197h1v1h-1zM292 311h1v1h-1zM293 59h1v2h-1zM293 67h1v1h-1zM293 383h1v1h-1zM294 57h1v2h-1zM294 65h1v2h-1zM294 165h1v1h-1zM294 196h1v1h-1zM294 313h1v1h-1zM294 384h1v2h-1zM295 62h1v3h-1zM295 315h1v1h-1zM295 386h1v3h-1zM296 60h1v2h-1zM296 68h1v1h-1zM296 163h1v1h-1zM296 195h1v1h-1zM296 317h1v1h-1zM296 382h1v1h-1zM296 389h1v2h-1zM297 58h1v2h-1zM297 66h1v2h-1zM297 383h1v2h-1zM297 391h1v2h-1zM298 63h1v3h-1zM298 161h1v1h-1zM298 194h1v1h-1zM298 319h1v1h-1zM298 385h1v3h-1zM299 61h1v2h-1zM299 69h1v2h-1zM299 321h1v1h-1zM299 380h1v2h-1zM299 388h1v2h-1zM300 60h1v1h-1zM300 67h1v2h-1zM300 159h1v1h-1zM300 193h1v1h-1zM300 382h1v2h-1zM300 390h1v1h-1zM301 65h1v2h-1zM301 323h1v1h-1zM301 384h1v2h-1zM302 63h1v2h-1zM302 157h1v1h-1zM302 192h1v1h-1zM302 325h1v1h-1zM302 380h1v2h-1zM302 386h1v2h-1zM303 61h1v2h-1zM303 382h1v2h-1zM303 388h1v2h-1zM304 155h1v1h-1zM304 192h1v1h-1zM304 327h1v1h-1zM304 384h1v2h-1zM305 70h1v2h-1zM305 329h1v1h-1zM305 386h1v2h-1zM306 68h1v2h-1zM306 153h1v1h-1zM306 191h1v1h-1zM306 388h1v1h-1zM307 66h1v2h-1zM307 73h1v1h-1zM307 331h1v1h-1zM307 377h1v1h-1zM308 64h1v2h-1zM308 71h1v2h-1zM308 151h1v1h-1zM308 190h1v1h-1zM308 333h1v1h-1zM308 378h1v2h-1zM309 69h1v2h-1zM309 335h1v1h-1zM309 380h1v2h-1zM310 67h1v2h-1zM310 74h1v1h-1zM310 149h1v1h-1zM310 189h1v1h-1zM310 376h1v1h-1zM310 382h1v2h-1zM311 65h1v2h-1zM311 72h1v2h-1zM311 337h1v1h-1zM311 377h1v2h-1zM311 384h1v2h-1zM312 70h1v2h-1zM312 76h1v1h-1zM312 148h1v1h-1zM312 188h1v1h-1zM312 339h1v1h-1zM312 374h1v1h-1zM312 379h1v2h-1zM313 68h1v2h-1zM313 74h1v2h-1zM313 375h1v2h-1zM313 381h1v2h-1zM314 66h1v2h-1zM314 72h1v2h-1zM314 146h1v1h-1zM314 187h1v1h-1zM314 341h1v1h-1zM314 377h1v1h-1zM314 383h1v2h-1zM315 71h1v1h-1zM315 343h1v1h-1zM315 378h1v2h-1zM316 69h1v2h-1zM316 144h1v1h-1zM316 186h1v1h-1zM316 373h1v2h-1zM316 380h1v2h-1zM317 68h1v1h-1zM317 375h1v2h-1zM317 382h1v1h-1zM318 79h1v1h-1zM318 142h1v1h-1zM318 185h1v1h-1zM318 377h1v2h-1zM319 77h1v2h-1zM319 379h1v2h-1zM320 75h1v2h-1zM320 140h1v1h-1zM320 184h1v1h-1zM320 381h1v1h-1zM321 74h1v1h-1zM321 79h1v2h-1zM321 370h1v2h-1zM322 72h1v2h-1zM322 78h1v1h-1zM322 138h1v1h-1zM322 183h1v1h-1zM322 372h1v1h-1zM323 71h1v1h-1zM323 76h1v2h-1zM323 82h1v1h-1zM323 368h1v1h-1zM323 373h1v2h-1zM324 75h1v1h-1zM324 80h1v2h-1zM324 136h1v1h-1zM324 183h1v1h-1zM324 369h1v2h-1zM324 375h1v1h-1zM325 73h1v2h-1zM325 78h1v2h-1zM325 371h1v1h-1zM325 376h1v2h-1zM326 72h1v1h-1zM326 77h1v1h-1zM326 82h1v2h-1zM326 134h1v1h-1zM326 182h1v1h-1zM326 367h1v1h-1zM326 372h1v2h-1zM326 378h1v1h-1zM327 75h1v2h-1zM327 81h1v1h-1zM327 368h1v2h-1zM327 374h1v2h-1zM328 74h1v1h-1zM328 80h1v1h-1zM328 132h1v1h-1zM328 181h1v1h-1zM328 370h1v1h-1zM328 376h1v1h-1zM329 78h1v2h-1zM329 365h1v2h-1zM329 371h1v1h-1zM330 77h1v1h-1zM330 131h1v1h-1zM330 180h1v1h-1zM330 367h1v1h-1zM330 372h1v2h-1zM331 76h1v1h-1zM331 85h1v2h-1zM331 368h1v2h-1zM331 374h1v1h-1zM332 84h1v1h-1zM332 129h1v1h-1zM332 179h1v1h-1zM332 370h1v1h-1zM333 83h1v1h-1zM333 89h1v1h-1zM333 361h1v1h-1zM333 371h1v2h-1zM334 81h1v2h-1zM334 87h1v2h-1zM334 127h1v1h-1zM334 178h1v1h-1zM334 362h1v1h-1zM335 80h1v1h-1zM335 86h1v1h-1zM335 363h1v2h-1zM336 79h1v1h-1zM336 85h1v1h-1zM336 89h1v2h-1zM336 125h1v1h-1zM336 177h1v1h-1zM336 360h1v1h-1zM336 365h1v1h-1zM337 83h1v2h-1zM337 88h1v1h-1zM337 361h1v2h-1zM337 366h1v1h-1zM338 82h1v1h-1zM338 87h1v1h-1zM338 93h1v1h-1zM338 176h1v1h-1zM338 357h1v1h-1zM338 363h1v1h-1zM338 367h1v2h-1zM339 81h1v1h-1zM339 85h1v2h-1zM339 91h1v2h-1zM339 358h1v1h-1zM339 364h1v1h-1zM339 369h1v1h-1zM340 84h1v1h-1zM340 90h1v1h-1zM340 175h1v1h-1zM340 356h1v1h-1zM340 359h1v2h-1zM340 365h1v2h-1zM341 83h1v1h-1zM341 89h1v1h-1zM341 357h1v1h-1zM341 361h1v1h-1zM341 367h1v1h-1zM342 87h1v2h-1zM342 96h1v1h-1zM342 174h1v1h-1zM342 358h1v1h-1zM342 362h1v1h-1zM343 86h1v1h-1zM343 95h1v1h-1zM343 359h1v2h-1zM343 363h1v2h-1zM344 85h1v1h-1zM344 94h1v1h-1zM344 173h1v1h-1zM344 361h1v1h-1zM344 365h1v1h-1zM345 93h1v1h-1zM345 97h1v1h-1zM345 353h1v1h-1zM345 362h1v1h-1zM346 92h1v1h-1zM346 96h1v1h-1zM346 173h1v1h-1zM346 354h1v1h-1zM346 363h1v1h-1zM347 91h1v1h-1zM347 95h1v1h-1zM347 100h1v1h-1zM347 350h1v1h-1zM347 355h1v1h-1zM348 90h1v1h-1zM348 94h1v1h-1zM348 99h1v1h-1zM348 172h1v1h-1zM348 351h1v1h-1zM348 356h1v1h-1zM349 89h1v1h-1zM349 93h1v1h-1zM349 98h1v1h-1zM349 102h1v1h-1zM349 348h1v1h-1zM349 352h1v1h-1zM349 357h1v1h-1zM350 92h1v1h-1zM350 97h1v1h-1zM350 101h1v1h-1zM350 171h1v1h-1zM350 349h1v1h-1zM350 353h1v1h-1zM350 358h1v1h-1zM351 91h1v1h-1zM351 96h1v1h-1zM351 100h1v1h-1zM351 346h1v1h-1zM351 350h1v1h-1zM351 354h1v1h-1zM351 359h1v1h-1zM352 95h1v1h-1zM352 99h1v1h-1zM352 170h1v1h-1zM352 347h1v1h-1zM352 351h1v1h-1zM352 355h1v1h-1zM353 94h1v1h-1zM353 98h1v1h-1zM353 106h1v1h-1zM353 348h1v1h-1zM353 352h1v1h-1zM353 356h1v1h-1zM354 93h1v1h-1zM354 97h1v1h-1zM354 105h1v1h-1zM354 169h1v1h-1zM354 349h1v1h-1zM354 353h1v1h-1zM354 357h1v1h-1zM355 96h1v1h-1zM355 350h1v1h-1zM355 354h1v1h-1zM356 95h1v1h-1zM356 108h1v1h-1zM356 168h1v1h-1zM356 342h1v1h-1zM356 351h1v1h-1zM356 355h1v1h-1zM357 103h1v1h-1zM357 107h1v1h-1zM357 343h1v1h-1zM357 352h1v1h-1zM358 102h1v1h-1zM358 106h1v1h-1zM358 110h1v1h-1zM358 167h1v1h-1zM358 340h1v1h-1zM358 344h1v1h-1zM358 353h1v1h-1zM359 109h1v1h-1zM359 341h1v1h-1zM360 108h1v1h-1zM360 112h1v1h-1zM360 166h1v1h-1zM360 338h1v1h-1zM360 342h1v1h-1zM361 100h1v1h-1zM361 104h1v1h-1zM361 111h1v1h-1zM361 335h1v1h-1zM361 339h1v1h-1zM361 346h1v1h-1zM362 103h1v1h-1zM362 110h1v1h-1zM362 165h1v1h-1zM362 336h1v1h-1zM362 340h1v1h-1zM362 347h1v1h-1zM363 102h1v1h-1zM363 106h1v1h-1zM363 117h1v1h-1zM363 344h1v1h-1zM363 348h1v1h-1zM364 105h1v1h-1zM364 116h1v1h-1zM364 164h1v1h-1zM364 345h1v1h-1zM365 104h1v1h-1zM365 108h1v1h-1zM365 338h1v1h-1zM365 342h1v1h-1zM365 346h1v1h-1zM366 107h1v1h-1zM366 119h1v1h-1zM366 331h1v1h-1zM366 339h1v1h-1zM366 343h1v1h-1zM367 106h1v1h-1zM367 114h1v1h-1zM367 344h1v1h-1zM368 113h1v1h-1zM368 121h1v1h-1zM368 329h1v1h-1zM369 117h1v1h-1zM369 124h1v1h-1zM369 326h1v1h-1zM369 333h1v1h-1zM369 341h1v1h-1zM370 116h1v1h-1zM370 334h1v1h-1zM371 111h1v1h-1zM371 119h1v1h-1zM371 331h1v1h-1zM372 118h1v1h-1zM372 122h1v1h-1zM372 324h1v1h-1zM372 328h1v1h-1zM372 332h1v1h-1zM373 114h1v1h-1zM373 129h1v1h-1zM373 336h1v1h-1zM375 116h1v1h-1zM375 326h1v1h-1zM375 334h1v1h-1zM376 127h1v1h-1zM376 134h1v1h-1zM376 316h1v1h-1zM376 327h1v1h-1zM377 119h1v1h-1zM377 130h1v1h-1zM377 137h1v1h-1zM377 313h1v1h-1zM377 320h1v1h-1zM377 331h1v1h-1zM379 132h1v1h-1zM379 318h1v1h-1zM379 329h1v1h-1zM380 128h1v1h-1zM380 322h1v1h-1zM381 124h1v1h-1zM383 144h1v1h-1zM383 306h1v1h-1zM384 129h1v1h-1zM384 140h1v1h-1zM384 321h1v1h-1zM386 132h1v1h-1zM386 318h1v1h-1zM388 155h1v1h-1zM389 137h1v1h-1zM390 310h1v1h-1zM391 161h1v1h-1zM391 289h1v1h-1zM392 142h1v1h-1zM392 163h1v1h-1zM392 308h1v1h-1zM393 284h1v1h-1zM394 169h1v1h-1zM394 172h1v1h-1zM394 278h1v1h-1zM396 174h1v1h-1zM396 276h1v1h-1zM397 177h1v1h-1zM397 273h1v1h-1zM399 183h1v1h-1zM402 165h1v1h-1zM403 168h1v1h-1zM403 282h1v1h-1zM404 171h1v1h-1zM404 279h1v1h-1zM405 174h1v1h-1zM405 276h1v1h-1zM406 273h1v1h-1z"/>
<path fill="#ff0000" d="M609 88h3v1h-3zM68 91h3v1h-3zM78 91h3v1h-3zM609 94h3v1h-3zM127 125h5v1h-5zM125 126h2v1h-2zM132 126h2v1h-2zM609 126h3v1h-3zM275 127h2v1h-2zM272 128h3v1h-3zM269 129h3v1h-3zM267 130h2v1h-2zM264 131h3v1h-3zM261 132h3v1h-3zM258 133h3v1h-3zM255 134h3v1h-3zM253 135h2v1h-2zM250 136h3v1h-3zM247 137h3v1h-3zM244 138h3v1h-3zM241 139h3v1h-3zM125 140h2v1h-2zM132 140h2v1h-2zM239 140h2v1h-2zM127 141h5v1h-5zM236 141h3v1h-3zM233 142h3v1h-3zM230 143h3v1h-3zM243 143h2v1h-2zM227 144h3v1h-3zM225 145h2v1h-2zM222 146h3v1h-3zM235 146h2v1h-2zM219 147h3v1h-3zM216 148h3v1h-3zM423 148h5v1h-5zM213 149h3v1h-3zM426 149h2v1h-2zM211 150h2v1h-2zM208 151h3v1h-3zM205 152h3v1h-3zM202 153h3v1h-3zM199 154h3v1h-3zM196 155h3v1h-3zM194 156h2v1h-2zM191 157h3v1h-3zM188 158h3v1h-3zM263 158h2v1h-2zM185 159h3v1h-3zM182 160h3v1h-3zM180 161h2v1h-2zM177 162h3v1h-3zM174 163h3v1h-3zM171 164h3v1h-3zM168 165h3v1h-3zM166 166h2v1h-2zM612 166h2v1h-2zM163 167h3v1h-3zM606 167h2v1h-2zM160 168h3v1h-3zM157 169h3v1h-3zM612 169h2v1h-2zM154 170h3v1h-3zM152 171h2v1h-2zM354 171h2v1h-2zM149 172h4v1h-4zM146 173h3v1h-3zM143 174h4v1h-4zM140 175h3v1h-3zM138 176h3v1h-3zM135 177h4v1h-4zM132 178h3v1h-3zM130 179h2v1h-2zM353 183h15v1h-15zM608 216h5v1h-5zM608 224h5v1h-5zM611 256h4v1h-4zM613 257h2v1h-2zM608 259h2v1h-2zM608 264h2v1h-2zM607 273h8v1h-8zM207 350h6v1h-6zM211 351h2v1h-2zM208 353h2v1h-2zM199 356h5v1h-5zM199 366h5v1h-5zM195 412h5v1h-5zM66 93h1v3h-1zM67 92h1v1h-1zM67 96h1v1h-1zM68 97h1v1h-1zM71 92h1v1h-1zM72 93h1v5h-1zM73 98h1v1h-1zM74 99h1v9h-1zM75 98h1v1h-1zM76 93h1v5h-1zM77 92h1v1h-1zM80 97h1v1h-1zM81 92h1v1h-1zM81 96h1v1h-1zM82 93h1v3h-1zM121 131h1v5h-1zM122 129h1v2h-1zM122 136h1v2h-1zM123 128h1v1h-1zM123 138h1v1h-1zM124 127h1v1h-1zM124 139h1v1h-1zM129 133h1v1h-1zM134 127h1v1h-1zM134 139h1v1h-1zM135 128h1v1h-1zM135 138h1v1h-1zM136 129h1v2h-1zM136 136h1v2h-1zM137 131h1v5h-1zM144 175h1v1h-1zM146 148h1v1h-1zM150 173h1v1h-1zM154 172h1v1h-1zM158 170h1v1h-1zM160 170h1v1h-1zM162 169h1v1h-1zM164 168h1v1h-1zM166 168h1v1h-1zM168 167h1v1h-1zM170 167h1v1h-1zM172 166h1v1h-1zM174 165h1v1h-1zM176 165h1v1h-1zM178 164h1v1h-1zM180 163h1v1h-1zM182 163h1v1h-1zM184 162h1v1h-1zM186 162h1v1h-1zM187 126h1v1h-1zM188 161h1v1h-1zM189 127h1v1h-1zM189 424h1v1h-1zM190 160h1v1h-1zM190 425h1v1h-1zM191 128h1v1h-1zM191 416h1v5h-1zM191 426h1v1h-1zM192 160h1v1h-1zM192 415h1v1h-1zM192 421h1v1h-1zM192 425h1v1h-1zM193 129h1v1h-1zM193 414h1v1h-1zM193 422h1v3h-1zM194 159h1v1h-1zM194 413h1v1h-1zM195 130h1v1h-1zM196 158h1v1h-1zM196 359h1v5h-1zM197 131h1v1h-1zM197 358h1v1h-1zM197 364h1v1h-1zM198 158h1v1h-1zM198 357h1v1h-1zM198 365h1v1h-1zM199 131h1v1h-1zM200 157h1v1h-1zM200 413h1v1h-1zM201 132h1v1h-1zM201 414h1v1h-1zM201 422h1v3h-1zM202 157h1v1h-1zM202 415h1v1h-1zM202 421h1v1h-1zM202 425h1v1h-1zM203 133h1v1h-1zM203 416h1v5h-1zM203 426h1v1h-1zM204 156h1v1h-1zM204 357h1v1h-1zM204 365h1v1h-1zM204 427h1v1h-1zM205 134h1v1h-1zM205 356h1v1h-1zM205 358h1v1h-1zM205 364h1v1h-1zM205 428h1v1h-1zM206 155h1v1h-1zM206 355h1v1h-1zM206 359h1v5h-1zM207 135h1v1h-1zM207 354h1v1h-1zM208 155h1v1h-1zM208 336h1v1h-1zM209 136h1v1h-1zM210 119h1v1h-1zM210 154h1v1h-1zM210 352h1v1h-1zM211 136h1v1h-1zM212 153h1v1h-1zM212 352h1v4h-1zM213 121h1v1h-1zM213 137h1v1h-1zM214 153h1v1h-1zM215 138h1v1h-1zM216 123h1v1h-1zM216 152h1v1h-1zM217 139h1v1h-1zM218 152h1v1h-1zM219 126h1v1h-1zM219 140h1v1h-1zM220 151h1v1h-1zM221 141h1v1h-1zM222 128h1v1h-1zM222 150h1v1h-1zM223 141h1v1h-1zM224 150h1v1h-1zM225 130h1v1h-1zM225 142h1v1h-1zM226 149h1v1h-1zM227 143h1v1h-1zM228 132h1v1h-1zM228 148h1v1h-1zM230 148h1v1h-1zM231 134h1v1h-1zM231 145h1v1h-1zM232 147h1v1h-1zM233 146h1v1h-1zM234 137h1v1h-1zM234 147h1v1h-1zM237 139h1v1h-1zM237 147h1v1h-1zM238 145h1v1h-1zM239 148h1v1h-1zM240 141h1v1h-1zM240 145h1v1h-1zM241 149h1v1h-1zM242 144h1v1h-1zM243 150h1v1h-1zM245 150h1v1h-1zM246 143h1v1h-1zM246 145h1v1h-1zM247 151h1v1h-1zM248 142h1v1h-1zM249 148h1v1h-1zM249 152h1v1h-1zM250 142h1v1h-1zM251 153h1v1h-1zM252 141h1v1h-1zM252 150h1v1h-1zM253 154h1v1h-1zM254 140h1v1h-1zM255 152h1v1h-1zM255 155h1v1h-1zM256 140h1v1h-1zM257 155h1v1h-1zM258 139h1v1h-1zM258 154h1v1h-1zM259 156h1v1h-1zM260 138h1v1h-1zM261 156h1v2h-1zM262 138h1v1h-1zM264 137h1v1h-1zM265 159h1v1h-1zM266 137h1v1h-1zM267 160h1v2h-1zM268 136h1v1h-1zM269 160h1v1h-1zM270 135h1v1h-1zM270 163h1v1h-1zM271 161h1v1h-1zM272 135h1v1h-1zM273 162h1v1h-1zM273 165h1v1h-1zM274 134h1v1h-1zM275 163h1v1h-1zM276 133h1v1h-1zM276 167h1v1h-1zM277 164h1v1h-1zM278 133h1v1h-1zM279 165h1v1h-1zM279 169h1v1h-1zM280 132h1v1h-1zM281 165h1v1h-1zM282 132h1v1h-1zM282 172h1v1h-1zM283 166h1v1h-1zM284 131h1v1h-1zM285 167h1v1h-1zM285 174h1v1h-1zM287 168h1v1h-1zM288 176h1v1h-1zM289 169h1v1h-1zM291 170h1v1h-1zM291 178h1v1h-1zM293 170h1v1h-1zM294 180h1v1h-1zM295 171h1v1h-1zM297 172h1v1h-1zM297 183h1v1h-1zM299 173h1v1h-1zM300 185h1v1h-1zM301 174h1v1h-1zM303 175h1v1h-1zM303 187h1v1h-1zM305 175h1v1h-1zM306 189h1v1h-1zM307 176h1v1h-1zM309 177h1v1h-1zM309 191h1v1h-1zM311 178h1v1h-1zM312 194h1v1h-1zM313 179h1v1h-1zM315 180h1v1h-1zM315 196h1v1h-1zM317 180h1v1h-1zM318 198h1v1h-1zM319 181h1v1h-1zM321 182h1v1h-1zM321 200h1v1h-1zM323 183h1v1h-1zM324 202h1v1h-1zM325 184h1v1h-1zM327 185h1v1h-1zM327 205h1v1h-1zM329 185h1v1h-1zM330 207h1v1h-1zM331 186h1v1h-1zM333 209h1v1h-1zM336 211h1v1h-1zM338 185h1v1h-1zM339 213h1v1h-1zM353 182h1v1h-1zM354 180h1v2h-1zM355 178h1v2h-1zM356 172h1v1h-1zM356 176h1v2h-1zM357 173h1v3h-1zM363 171h1v12h-1zM363 184h1v2h-1zM364 170h1v1h-1zM365 169h1v1h-1zM411 164h1v1h-1zM412 163h1v1h-1zM413 154h1v1h-1zM413 162h1v1h-1zM414 155h1v1h-1zM414 161h1v1h-1zM415 156h1v1h-1zM415 160h1v1h-1zM416 157h1v1h-1zM416 159h1v1h-1zM417 158h1v1h-1zM418 157h1v1h-1zM418 159h1v1h-1zM419 156h1v1h-1zM419 160h1v1h-1zM420 155h1v1h-1zM420 161h1v1h-1zM421 154h1v1h-1zM421 162h1v1h-1zM422 153h1v1h-1zM423 152h1v1h-1zM424 151h1v1h-1zM425 150h1v1h-1zM427 150h1v3h-1zM606 132h1v1h-1zM606 218h1v5h-1zM606 261h1v2h-1zM607 86h1v1h-1zM607 90h1v3h-1zM607 128h1v3h-1zM607 133h1v1h-1zM607 166h1v1h-1zM607 168h1v3h-1zM607 217h1v1h-1zM607 223h1v1h-1zM607 260h1v1h-1zM607 263h1v1h-1zM607 272h1v1h-1zM608 87h1v1h-1zM608 89h1v1h-1zM608 93h1v1h-1zM608 127h1v1h-1zM608 131h1v2h-1zM608 171h1v3h-1zM608 267h1v1h-1zM608 270h1v2h-1zM609 167h1v4h-1zM609 268h1v2h-1zM610 166h1v1h-1zM610 220h1v1h-1zM610 260h1v1h-1zM610 263h1v1h-1zM611 167h1v1h-1zM611 259h1v1h-1zM611 261h1v2h-1zM612 87h1v1h-1zM612 89h1v1h-1zM612 93h1v1h-1zM612 127h1v1h-1zM612 131h1v2h-1zM612 168h1v1h-1zM612 258h1v1h-1zM612 267h1v6h-1zM612 274h1v1h-1zM613 86h1v1h-1zM613 90h1v3h-1zM613 128h1v3h-1zM613 133h1v1h-1zM613 174h1v1h-1zM613 217h1v1h-1zM613 223h1v1h-1zM613 266h1v1h-1zM614 134h1v1h-1zM614 167h1v2h-1zM614 170h1v4h-1zM614 218h1v5h-1zM614 258h1v2h-1z"/>
<path fill="#ffff00" d="M362 65h3v1h-3zM351 66h2v1h-2zM359 67h2v1h-2zM362 71h3v1h-3zM169 95h9v1h-9zM608 97h6v1h-6zM175 99h5v1h-5zM173 100h2v1h-2zM608 103h6v1h-6zM611 138h3v1h-3zM612 176h2v1h-2zM606 177h2v1h-2zM612 179h2v1h-2zM27 188h2v1h-2zM34 188h2v1h-2zM29 189h5v1h-5zM27 190h2v1h-2zM34 190h2v1h-2zM27 200h2v1h-2zM34 200h2v1h-2zM29 201h5v1h-5zM607 277h5v1h-5zM609 279h4v1h-4zM305 405h2v1h-2zM302 407h2v1h-2zM25 185h1v1h-1zM25 193h1v5h-1zM26 186h1v2h-1zM26 191h1v2h-1zM26 198h1v2h-1zM36 186h1v2h-1zM36 191h1v2h-1zM36 198h1v2h-1zM37 185h1v1h-1zM37 193h1v5h-1zM173 93h1v2h-1zM173 96h1v4h-1zM173 101h1v7h-1zM179 105h1v3h-1zM180 100h1v1h-1zM180 104h1v1h-1zM180 108h1v1h-1zM181 101h1v3h-1zM181 109h1v1h-1zM184 122h1v1h-1zM279 129h1v1h-1zM282 130h1v1h-1zM292 402h1v1h-1zM293 403h1v1h-1zM294 404h1v13h-1zM295 403h1v1h-1zM296 402h1v1h-1zM297 403h1v1h-1zM298 404h1v13h-1zM299 403h1v1h-1zM300 402h1v1h-1zM301 403h1v1h-1zM302 404h1v3h-1zM302 408h1v7h-1zM302 418h1v1h-1zM303 415h1v1h-1zM303 417h1v1h-1zM304 406h1v1h-1zM304 416h1v1h-1zM305 415h1v1h-1zM305 417h1v1h-1zM306 404h1v1h-1zM306 406h1v9h-1zM306 418h1v1h-1zM350 67h1v1h-1zM352 65h1v1h-1zM352 67h1v7h-1zM353 74h1v1h-1zM354 75h1v5h-1zM355 74h1v1h-1zM356 68h1v6h-1zM357 66h1v2h-1zM358 65h1v1h-1zM359 66h1v1h-1zM360 68h1v1h-1zM361 66h1v1h-1zM361 69h1v1h-1zM362 70h1v1h-1zM364 72h1v1h-1zM364 81h1v1h-1zM365 66h1v1h-1zM365 70h1v1h-1zM365 73h1v1h-1zM365 80h1v1h-1zM366 67h1v3h-1zM366 74h1v6h-1zM606 136h1v1h-1zM607 96h1v1h-1zM607 104h1v1h-1zM607 137h1v7h-1zM607 176h1v1h-1zM607 178h1v3h-1zM608 136h1v1h-1zM608 181h1v3h-1zM609 98h1v5h-1zM609 137h1v7h-1zM609 177h1v4h-1zM609 276h1v1h-1zM609 278h1v1h-1zM609 280h1v4h-1zM610 136h1v1h-1zM610 176h1v1h-1zM611 137h1v1h-1zM611 139h1v4h-1zM611 144h1v1h-1zM611 177h1v1h-1zM612 98h1v5h-1zM612 143h1v1h-1zM612 178h1v1h-1zM612 282h1v2h-1zM613 137h1v1h-1zM613 139h1v4h-1zM613 144h1v1h-1zM613 184h1v1h-1zM613 280h1v2h-1zM613 284h1v1h-1zM614 96h1v1h-1zM614 104h1v1h-1zM614 177h1v2h-1zM614 180h1v4h-1z"/>
<path fill="#00ff00" d="M258 23h2v1h-2zM264 23h2v1h-2zM261 27h2v1h-2zM267 27h2v1h-2zM258 33h2v1h-2zM264 33h2v1h-2zM261 37h2v1h-2zM267 37h2v1h-2zM202 84h5v1h-5zM202 92h5v1h-5zM200 96h9v1h-9zM278 98h9v1h-9zM281 104h3v1h-3zM150 107h5v1h-5zM609 107h3v1h-3zM281 108h3v1h-3zM607 108h2v1h-2zM612 108h2v1h-2zM607 110h2v1h-2zM612 111h2v1h-2zM607 113h2v1h-2zM612 113h2v1h-2zM609 114h3v1h-3zM150 115h5v1h-5zM148 119h9v1h-9zM168 136h2v1h-2zM170 137h2v1h-2zM172 138h2v1h-2zM174 139h2v1h-2zM176 140h2v1h-2zM178 141h3v1h-3zM181 142h2v1h-2zM183 143h2v1h-2zM185 144h2v1h-2zM187 145h2v1h-2zM189 146h3v1h-3zM192 147h2v1h-2zM194 148h2v1h-2zM196 149h2v1h-2zM198 150h2v1h-2zM200 151h3v1h-3zM203 152h2v1h-2zM205 153h2v1h-2zM207 154h2v1h-2zM612 154h2v1h-2zM209 155h2v1h-2zM211 156h3v1h-3zM214 157h2v1h-2zM216 158h2v1h-2zM218 159h2v1h-2zM220 160h3v1h-3zM223 161h2v1h-2zM225 162h2v1h-2zM227 163h2v1h-2zM229 164h2v1h-2zM231 165h3v1h-3zM234 166h2v1h-2zM236 167h2v1h-2zM237 168h3v1h-3zM239 169h3v1h-3zM242 170h4v1h-4zM245 171h2v1h-2zM247 172h2v1h-2zM249 173h2v1h-2zM251 174h2v1h-2zM253 175h3v1h-3zM256 176h2v1h-2zM258 177h2v1h-2zM260 178h2v1h-2zM262 179h2v1h-2zM264 180h3v1h-3zM267 181h2v1h-2zM269 182h2v1h-2zM271 183h2v1h-2zM273 184h2v1h-2zM275 185h3v1h-3zM278 186h2v1h-2zM280 187h2v1h-2zM607 187h2v1h-2zM610 187h2v1h-2zM282 188h2v1h-2zM609 188h2v1h-2zM612 188h2v1h-2zM284 189h2v1h-2zM286 190h3v1h-3zM289 191h2v1h-2zM291 192h2v1h-2zM607 192h2v1h-2zM610 192h2v1h-2zM293 193h2v1h-2zM609 193h2v1h-2zM612 193h2v1h-2zM295 194h2v1h-2zM297 195h3v1h-3zM300 196h2v1h-2zM302 197h2v1h-2zM304 198h2v1h-2zM306 199h3v1h-3zM309 200h2v1h-2zM311 201h2v1h-2zM313 202h2v1h-2zM315 203h2v1h-2zM317 204h3v1h-3zM320 205h2v1h-2zM322 206h2v1h-2zM324 207h2v1h-2zM326 208h2v1h-2zM328 209h3v1h-3zM331 210h2v1h-2zM333 211h2v1h-2zM335 212h2v1h-2zM337 213h2v1h-2zM339 214h2v1h-2zM609 237h3v1h-3zM609 241h3v1h-3zM608 243h5v1h-5zM609 246h3v1h-3zM609 250h3v1h-3zM608 252h5v1h-5zM37 288h11v1h-11zM608 289h5v1h-5zM37 300h11v1h-11zM384 347h5v1h-5zM378 353h7v1h-7zM388 353h7v1h-7zM378 357h17v1h-17zM35 286h1v1h-1zM35 302h1v1h-1zM36 287h1v1h-1zM36 301h1v1h-1zM39 289h1v11h-1zM45 289h1v11h-1zM48 287h1v1h-1zM48 301h1v1h-1zM49 286h1v1h-1zM49 302h1v1h-1zM148 105h1v1h-1zM148 109h1v5h-1zM149 106h1v1h-1zM149 108h1v1h-1zM149 114h1v1h-1zM149 151h1v1h-1zM150 153h1v1h-1zM150 155h1v1h-1zM151 151h1v1h-1zM151 157h1v1h-1zM152 116h1v3h-1zM152 120h1v2h-1zM152 159h1v1h-1zM152 161h1v1h-1zM153 152h1v1h-1zM153 163h1v1h-1zM154 165h1v1h-1zM154 167h1v1h-1zM155 106h1v1h-1zM155 108h1v1h-1zM155 114h1v1h-1zM155 152h1v1h-1zM155 169h1v1h-1zM156 105h1v1h-1zM156 109h1v5h-1zM156 171h1v1h-1zM156 173h1v1h-1zM157 153h1v1h-1zM157 175h1v1h-1zM158 177h1v1h-1zM158 179h1v1h-1zM159 153h1v1h-1zM159 181h1v1h-1zM160 183h1v1h-1zM160 185h1v1h-1zM161 153h1v1h-1zM161 187h1v1h-1zM162 189h1v1h-1zM162 191h1v1h-1zM163 154h1v1h-1zM163 193h1v1h-1zM164 195h1v1h-1zM164 197h1v1h-1zM165 132h1v1h-1zM165 154h1v1h-1zM165 199h1v1h-1zM166 201h1v1h-1zM166 203h1v1h-1zM167 155h1v1h-1zM167 205h1v1h-1zM168 207h1v1h-1zM168 209h1v1h-1zM169 155h1v1h-1zM169 211h1v1h-1zM170 213h1v1h-1zM170 215h1v1h-1zM171 155h1v1h-1zM171 217h1v1h-1zM172 219h1v1h-1zM172 221h1v1h-1zM173 156h1v1h-1zM173 223h1v1h-1zM174 225h1v1h-1zM174 227h1v1h-1zM175 156h1v1h-1zM175 229h1v1h-1zM176 231h1v1h-1zM176 233h1v1h-1zM177 156h1v1h-1zM177 235h1v1h-1zM178 237h1v1h-1zM178 239h1v1h-1zM179 157h1v1h-1zM179 241h1v1h-1zM180 243h1v1h-1zM180 245h1v1h-1zM181 157h1v1h-1zM181 247h1v1h-1zM182 249h1v1h-1zM182 251h1v1h-1zM183 158h1v1h-1zM183 253h1v1h-1zM184 255h1v1h-1zM184 257h1v1h-1zM185 158h1v1h-1zM185 259h1v1h-1zM186 261h1v1h-1zM186 263h1v1h-1zM187 158h1v1h-1zM187 265h1v1h-1zM188 267h1v1h-1zM188 269h1v1h-1zM189 159h1v1h-1zM189 271h1v1h-1zM190 273h1v1h-1zM190 275h1v1h-1zM191 159h1v1h-1zM191 277h1v1h-1zM192 279h1v1h-1zM192 281h1v1h-1zM193 160h1v1h-1zM193 283h1v1h-1zM194 285h1v1h-1zM194 287h1v1h-1zM195 160h1v1h-1zM195 289h1v1h-1zM196 291h1v1h-1zM196 293h1v1h-1zM197 160h1v1h-1zM197 295h1v1h-1zM198 297h1v1h-1zM198 299h1v1h-1zM199 161h1v1h-1zM199 301h1v1h-1zM200 86h1v5h-1zM200 303h1v1h-1zM200 305h1v1h-1zM201 85h1v1h-1zM201 91h1v1h-1zM201 161h1v1h-1zM201 307h1v1h-1zM202 309h1v1h-1zM202 311h1v1h-1zM203 162h1v1h-1zM203 313h1v1h-1zM204 93h1v3h-1zM204 97h1v4h-1zM204 315h1v1h-1zM204 317h1v1h-1zM205 162h1v1h-1zM205 319h1v1h-1zM206 321h1v1h-1zM206 323h1v1h-1zM207 85h1v1h-1zM207 91h1v1h-1zM207 162h1v1h-1zM207 325h1v1h-1zM208 86h1v5h-1zM208 327h1v1h-1zM208 329h1v1h-1zM209 114h1v1h-1zM209 163h1v1h-1zM209 331h1v1h-1zM210 330h1v1h-1zM211 163h1v1h-1zM211 329h1v1h-1zM212 327h1v2h-1zM213 164h1v1h-1zM213 326h1v1h-1zM214 325h1v1h-1zM215 164h1v1h-1zM215 324h1v1h-1zM216 323h1v1h-1zM217 164h1v1h-1zM217 322h1v1h-1zM218 320h1v2h-1zM219 165h1v1h-1zM219 319h1v1h-1zM220 318h1v1h-1zM221 165h1v1h-1zM221 317h1v1h-1zM222 316h1v1h-1zM223 165h1v1h-1zM223 315h1v1h-1zM224 313h1v2h-1zM225 166h1v1h-1zM225 312h1v1h-1zM226 311h1v1h-1zM227 166h1v1h-1zM227 310h1v1h-1zM228 309h1v1h-1zM229 167h1v1h-1zM229 308h1v1h-1zM230 307h1v1h-1zM231 167h1v1h-1zM231 305h1v2h-1zM232 304h1v1h-1zM233 167h1v1h-1zM233 303h1v1h-1zM234 302h1v1h-1zM235 168h1v1h-1zM235 301h1v1h-1zM236 300h1v1h-1zM237 298h1v2h-1zM238 297h1v1h-1zM239 296h1v1h-1zM240 295h1v1h-1zM241 294h1v1h-1zM242 293h1v1h-1zM243 169h1v1h-1zM243 291h1v2h-1zM244 290h1v1h-1zM245 289h1v1h-1zM246 288h1v1h-1zM247 170h1v1h-1zM247 287h1v1h-1zM248 286h1v1h-1zM249 171h1v1h-1zM249 284h1v2h-1zM250 283h1v1h-1zM251 171h1v1h-1zM251 282h1v1h-1zM252 281h1v1h-1zM253 171h1v1h-1zM253 280h1v1h-1zM254 279h1v1h-1zM255 28h1v1h-1zM255 38h1v1h-1zM255 172h1v1h-1zM255 277h1v2h-1zM256 26h1v2h-1zM256 36h1v2h-1zM256 276h1v1h-1zM257 25h1v1h-1zM257 35h1v1h-1zM257 172h1v1h-1zM257 275h1v1h-1zM258 24h1v1h-1zM258 34h1v1h-1zM258 274h1v1h-1zM259 22h1v1h-1zM259 32h1v1h-1zM259 173h1v1h-1zM259 273h1v1h-1zM260 24h1v3h-1zM260 34h1v3h-1zM260 272h1v1h-1zM261 28h1v1h-1zM261 38h1v1h-1zM261 173h1v1h-1zM261 271h1v1h-1zM262 26h1v1h-1zM262 36h1v1h-1zM262 269h1v2h-1zM263 25h1v1h-1zM263 35h1v1h-1zM263 173h1v1h-1zM263 268h1v1h-1zM264 24h1v1h-1zM264 34h1v1h-1zM264 267h1v1h-1zM265 22h1v1h-1zM265 32h1v1h-1zM265 174h1v1h-1zM265 266h1v1h-1zM266 24h1v3h-1zM266 34h1v3h-1zM266 265h1v1h-1zM267 28h1v1h-1zM267 38h1v1h-1zM267 174h1v1h-1zM267 264h1v1h-1zM268 26h1v1h-1zM268 36h1v1h-1zM268 262h1v2h-1zM269 25h1v1h-1zM269 35h1v1h-1zM269 174h1v1h-1zM269 261h1v1h-1zM270 23h1v2h-1zM270 33h1v2h-1zM270 260h1v1h-1zM271 22h1v1h-1zM271 32h1v1h-1zM271 175h1v1h-1zM271 259h1v1h-1zM272 258h1v1h-1zM273 175h1v1h-1zM273 257h1v1h-1zM274 255h1v2h-1zM275 176h1v1h-1zM275 254h1v1h-1zM276 92h1v1h-1zM276 102h1v1h-1zM276 253h1v1h-1zM277 93h1v1h-1zM277 101h1v1h-1zM277 122h1v1h-1zM277 176h1v1h-1zM277 252h1v1h-1zM278 94h1v4h-1zM278 99h1v2h-1zM278 251h1v1h-1zM279 176h1v1h-1zM279 250h1v1h-1zM280 105h1v3h-1zM280 248h1v2h-1zM281 177h1v1h-1zM281 247h1v1h-1zM282 96h1v2h-1zM282 99h1v5h-1zM282 246h1v1h-1zM283 177h1v1h-1zM283 245h1v1h-1zM284 105h1v3h-1zM284 244h1v1h-1zM285 178h1v1h-1zM285 243h1v1h-1zM286 94h1v4h-1zM286 99h1v2h-1zM286 241h1v2h-1zM287 93h1v1h-1zM287 101h1v1h-1zM287 178h1v1h-1zM287 240h1v1h-1zM288 92h1v1h-1zM288 102h1v1h-1zM288 239h1v1h-1zM289 178h1v1h-1zM289 238h1v1h-1zM290 237h1v1h-1zM291 179h1v1h-1zM291 236h1v1h-1zM292 235h1v1h-1zM293 179h1v1h-1zM293 233h1v2h-1zM294 232h1v1h-1zM295 180h1v1h-1zM295 231h1v1h-1zM296 230h1v1h-1zM297 180h1v1h-1zM297 229h1v1h-1zM298 228h1v1h-1zM299 180h1v1h-1zM299 226h1v2h-1zM300 225h1v1h-1zM301 181h1v1h-1zM301 224h1v1h-1zM302 223h1v1h-1zM303 181h1v1h-1zM303 222h1v1h-1zM304 221h1v1h-1zM305 182h1v1h-1zM305 219h1v2h-1zM306 218h1v1h-1zM307 182h1v1h-1zM307 217h1v1h-1zM308 216h1v1h-1zM309 182h1v1h-1zM309 215h1v1h-1zM310 214h1v1h-1zM311 183h1v1h-1zM311 212h1v2h-1zM312 211h1v1h-1zM313 183h1v1h-1zM313 210h1v1h-1zM314 209h1v1h-1zM315 183h1v1h-1zM315 208h1v1h-1zM316 207h1v1h-1zM317 184h1v1h-1zM317 205h1v2h-1zM319 184h1v1h-1zM319 203h1v1h-1zM320 202h1v1h-1zM321 185h1v1h-1zM321 201h1v1h-1zM322 200h1v1h-1zM323 185h1v1h-1zM323 199h1v1h-1zM324 197h1v2h-1zM325 185h1v1h-1zM325 196h1v1h-1zM326 195h1v1h-1zM327 186h1v1h-1zM327 194h1v1h-1zM328 193h1v1h-1zM329 186h1v1h-1zM329 192h1v1h-1zM330 190h1v2h-1zM331 187h1v1h-1zM331 189h1v1h-1zM332 188h1v1h-1zM333 187h1v1h-1zM382 349h1v3h-1zM383 348h1v1h-1zM383 352h1v1h-1zM389 348h1v1h-1zM389 352h1v1h-1zM390 349h1v3h-1zM606 109h1v1h-1zM606 111h1v2h-1zM606 146h1v1h-1zM606 189h1v1h-1zM606 194h1v1h-1zM607 147h1v7h-1zM607 188h1v1h-1zM607 193h1v1h-1zM607 286h1v1h-1zM607 291h1v1h-1zM608 146h1v1h-1zM608 186h1v1h-1zM608 191h1v1h-1zM608 236h1v1h-1zM608 238h1v3h-1zM608 247h1v3h-1zM608 287h1v2h-1zM608 290h1v1h-1zM609 111h1v2h-1zM609 147h1v7h-1zM609 189h1v1h-1zM609 194h1v1h-1zM609 293h1v1h-1zM610 146h1v1h-1zM610 242h1v1h-1zM610 244h1v1h-1zM610 251h1v1h-1zM610 253h1v2h-1zM610 287h1v2h-1zM610 290h1v3h-1zM610 294h1v1h-1zM611 109h1v2h-1zM611 147h1v7h-1zM611 186h1v1h-1zM611 191h1v1h-1zM611 293h1v1h-1zM612 189h1v1h-1zM612 194h1v1h-1zM612 236h1v1h-1zM612 238h1v3h-1zM612 247h1v3h-1zM612 287h1v2h-1zM612 290h1v1h-1zM613 187h1v1h-1zM613 192h1v1h-1zM613 286h1v1h-1zM613 291h1v1h-1zM614 109h1v2h-1zM614 112h1v1h-1zM614 152h1v2h-1zM614 186h1v1h-1zM614 191h1v1h-1z"/>
<path fill="#0000ff" d="M152 40h17v1h-17zM292 102h3v1h-3zM297 102h5v1h-5zM304 102h3v1h-3zM295 107h2v1h-2zM302 107h2v1h-2zM297 108h5v1h-5zM295 112h9v1h-9zM609 117h3v1h-3zM607 118h2v1h-2zM612 118h2v1h-2zM607 120h2v1h-2zM612 121h2v1h-2zM607 123h2v1h-2zM612 123h2v1h-2zM609 124h3v1h-3zM612 156h3v1h-3zM613 157h2v1h-2zM101 160h5v1h-5zM106 161h2v1h-2zM106 175h2v1h-2zM101 176h5v1h-5zM606 200h9v1h-9zM607 203h2v1h-2zM367 204h3v1h-3zM367 208h3v1h-3zM364 211h2v1h-2zM371 211h2v1h-2zM366 212h5v1h-5zM364 216h9v1h-9zM608 226h3v1h-3zM611 227h2v1h-2zM611 233h2v1h-2zM608 234h3v1h-3zM435 261h3v1h-3zM433 265h2v1h-2zM606 297h9v1h-9zM609 300h3v1h-3zM608 302h5v1h-5zM609 310h3v1h-3zM608 312h5v1h-5zM100 370h5v1h-5zM96 372h3v1h-3zM106 372h3v1h-3zM96 376h3v1h-3zM106 378h3v1h-3zM96 382h3v1h-3zM106 382h3v1h-3zM100 384h5v1h-5zM94 374h1v1h-1zM94 378h1v3h-1zM95 373h1v1h-1zM95 377h1v1h-1zM95 381h1v1h-1zM99 162h1v1h-1zM99 174h1v1h-1zM99 371h1v1h-1zM99 377h1v1h-1zM99 381h1v1h-1zM99 383h1v1h-1zM100 161h1v1h-1zM100 163h1v1h-1zM100 173h1v1h-1zM100 175h1v1h-1zM100 378h1v3h-1zM101 164h1v1h-1zM101 172h1v1h-1zM102 165h1v2h-1zM102 170h1v2h-1zM103 167h1v3h-1zM104 374h1v3h-1zM105 371h1v1h-1zM105 373h1v1h-1zM105 377h1v1h-1zM105 383h1v1h-1zM108 162h1v1h-1zM108 174h1v1h-1zM109 163h1v1h-1zM109 173h1v1h-1zM109 373h1v1h-1zM109 377h1v1h-1zM109 381h1v1h-1zM110 164h1v2h-1zM110 171h1v2h-1zM110 374h1v3h-1zM110 380h1v1h-1zM111 166h1v5h-1zM126 177h1v1h-1zM152 32h1v1h-1zM152 48h1v1h-1zM153 33h1v1h-1zM153 47h1v1h-1zM154 34h1v1h-1zM154 46h1v1h-1zM155 35h1v1h-1zM155 44h1v2h-1zM156 36h1v4h-1zM156 41h1v3h-1zM164 36h1v4h-1zM164 41h1v3h-1zM165 35h1v1h-1zM165 44h1v2h-1zM166 34h1v1h-1zM166 46h1v1h-1zM167 33h1v1h-1zM167 47h1v1h-1zM168 32h1v1h-1zM168 48h1v1h-1zM286 127h1v1h-1zM293 100h1v2h-1zM293 103h1v2h-1zM294 105h1v2h-1zM299 100h1v2h-1zM299 103h1v5h-1zM299 109h1v3h-1zM299 113h1v4h-1zM304 105h1v2h-1zM305 100h1v2h-1zM305 103h1v2h-1zM345 214h1v1h-1zM362 204h1v5h-1zM363 209h1v2h-1zM366 205h1v3h-1zM368 213h1v3h-1zM368 217h1v4h-1zM370 205h1v3h-1zM373 209h1v2h-1zM374 204h1v5h-1zM421 249h1v1h-1zM422 250h1v1h-1zM423 251h1v13h-1zM424 250h1v1h-1zM425 249h1v1h-1zM426 250h1v1h-1zM427 251h1v13h-1zM428 250h1v1h-1zM429 249h1v1h-1zM430 250h1v1h-1zM431 251h1v13h-1zM432 264h1v1h-1zM435 264h1v1h-1zM436 260h1v1h-1zM436 262h1v2h-1zM606 119h1v1h-1zM606 121h1v2h-1zM606 164h1v1h-1zM606 196h1v1h-1zM606 204h1v1h-1zM607 159h1v1h-1zM607 163h1v1h-1zM607 197h1v1h-1zM607 227h1v1h-1zM607 233h1v1h-1zM607 296h1v1h-1zM607 298h1v1h-1zM607 306h1v3h-1zM608 160h1v1h-1zM608 162h1v1h-1zM608 198h1v2h-1zM608 201h1v2h-1zM608 228h1v1h-1zM608 232h1v1h-1zM608 299h1v1h-1zM608 309h1v1h-1zM609 121h1v2h-1zM609 161h1v1h-1zM609 229h1v3h-1zM609 307h1v1h-1zM610 160h1v1h-1zM610 162h1v1h-1zM610 296h1v1h-1zM610 298h1v2h-1zM610 301h1v1h-1zM610 303h1v2h-1zM610 306h1v1h-1zM610 308h1v1h-1zM610 311h1v1h-1zM610 313h1v2h-1zM611 119h1v2h-1zM611 159h1v1h-1zM611 163h1v1h-1zM611 307h1v1h-1zM612 158h1v1h-1zM612 199h1v1h-1zM612 201h1v2h-1zM612 228h1v1h-1zM612 232h1v1h-1zM612 299h1v1h-1zM612 309h1v1h-1zM613 197h1v2h-1zM613 203h1v1h-1zM613 229h1v3h-1zM613 296h1v1h-1zM613 298h1v1h-1zM613 306h1v3h-1zM614 119h1v2h-1zM614 122h1v1h-1zM614 158h1v1h-1zM614 196h1v1h-1zM614 204h1v1h-1z"/>
<g opacity="0.999">
<text class="hn" transform="translate(72.5,263.5) scale(0.85,1)" fill="#ff0000">1</text>
<text class="hn" transform="translate(97.5,318.5) scale(0.85,1)" fill="#ffff00">2</text>
<text class="hn" transform="translate(134.5,356.5) scale(0.85,1)" fill="#00ff00">3</text>
<text class="hn" transform="translate(190.5,382.5) scale(0.85,1)" fill="#0000ff">4</text>
<text class="hn" transform="translate(275.5,381.5) scale(0.85,1)" fill="#ff0000">5</text>
<text class="hn" transform="translate(373.5,301.5) scale(0.85,1)" fill="#ffff00">6</text>
<text class="hn" transform="translate(388.5,195.5) scale(0.85,1)" fill="#00ff00">7</text>
<text class="hn" transform="translate(363.5,140.5) scale(0.85,1)" fill="#0000ff">8</text>
<text class="hn" transform="translate(326.5,102.5) scale(0.85,1)" fill="#ff0000">9</text>
<text class="hn two" transform="translate(271.43,76.5) scale(0.85,1)" fill="#ffff00">10</text>
<text class="hn two" transform="translate(186.43,77.5) scale(0.85,1)" fill="#00ff00">11</text>
<text class="hn two" transform="translate(88.43,157.5) scale(0.85,1)" fill="#0000ff">12</text>
<text class="sb" transform="translate(467.6,14) scale(1,1.06)"><tspan fill="#ffffff" stroke="#ffffff">Astrolog 5.40</tspan></text>
<text class="sb" transform="translate(467.6,24) scale(1,1.06)"><tspan fill="#bfbfbf" stroke="#bfbfbf">Sat April 1, 1995</tspan></text>
<text class="sb" transform="translate(467.6,34) scale(1,1.06)"><tspan fill="#bfbfbf" stroke="#bfbfbf"> 8:30am (ST -7:00 GMT)</tspan></text>
<text class="sb" transform="translate(467.6,44) scale(1,1.06)"><tspan fill="#bfbfbf" stroke="#bfbfbf">122°12W 47°58N</tspan></text>
<text class="sb" transform="translate(467.6,54) scale(1,1.06)"><tspan fill="#bfbfbf" stroke="#bfbfbf">Placidus houses.</tspan></text>
<text class="sb" transform="translate(467.6,64) scale(1,1.06)"><tspan fill="#bfbfbf" stroke="#bfbfbf">Tropical, Geocentric.</tspan></text>
<text class="sb" transform="translate(467.6,74) scale(1,1.06)"><tspan fill="#bfbfbf" stroke="#bfbfbf">Julian Day = 2449809.1458</tspan></text>
<text class="sb" transform="translate(467.6,94) scale(1,1.06)"><tspan fill="#ff0000" stroke="#ff0000"> 1st house: </tspan><tspan fill="#ffff00" stroke="#ffff00">24Tau30</tspan></text>
<text class="sb" transform="translate(467.6,104) scale(1,1.06)"><tspan fill="#ffff00" stroke="#ffff00"> 2nd house: </tspan><tspan fill="#00ff00" stroke="#00ff00">19Gem30</tspan></text>
<text class="sb" transform="translate(467.6,114) scale(1,1.06)"><tspan fill="#00ff00" stroke="#00ff00"> 3rd house: </tspan><tspan fill="#0000ff" stroke="#0000ff"> 8Can31</tspan></text>
<text class="sb" transform="translate(467.6,124) scale(1,1.06)"><tspan fill="#0000ff" stroke="#0000ff"> 4th house: </tspan><tspan fill="#0000ff" stroke="#0000ff">27Can44</tspan></text>
<text class="sb" transform="translate(467.6,134) scale(1,1.06)"><tspan fill="#ff0000" stroke="#ff0000"> 5th house: </tspan><tspan fill="#ff0000" stroke="#ff0000">22Leo02</tspan></text>
<text class="sb" transform="translate(467.6,144) scale(1,1.06)"><tspan fill="#ffff00" stroke="#ffff00"> 6th house: </tspan><tspan fill="#ffff00" stroke="#ffff00">29Vir43</tspan></text>
<text class="sb" transform="translate(467.6,154) scale(1,1.06)"><tspan fill="#00ff00" stroke="#00ff00"> 7th house: </tspan><tspan fill="#0000ff" stroke="#0000ff">24Sco30</tspan></text>
<text class="sb" transform="translate(467.6,164) scale(1,1.06)"><tspan fill="#0000ff" stroke="#0000ff"> 8th house: </tspan><tspan fill="#ff0000" stroke="#ff0000">19Sag30</tspan></text>
<text class="sb" transform="translate(467.6,174) scale(1,1.06)"><tspan fill="#ff0000" stroke="#ff0000"> 9th house: </tspan><tspan fill="#ffff00" stroke="#ffff00"> 8Cap31</tspan></text>
<text class="sb" transform="translate(467.6,184) scale(1,1.06)"><tspan fill="#ffff00" stroke="#ffff00">10th house: </tspan><tspan fill="#ffff00" stroke="#ffff00">27Cap44</tspan></text>
<text class="sb" transform="translate(467.6,194) scale(1,1.06)"><tspan fill="#00ff00" stroke="#00ff00">11th house: </tspan><tspan fill="#00ff00" stroke="#00ff00">22Aqu02</tspan></text>
<text class="sb" transform="translate(467.6,204) scale(1,1.06)"><tspan fill="#0000ff" stroke="#0000ff">12th house: </tspan><tspan fill="#0000ff" stroke="#0000ff">29Pis43</tspan></text>
<text class="sb" transform="translate(467.6,224) scale(1,1.06)"><tspan fill="#ff0000" stroke="#ff0000"> Sun: </tspan><tspan fill="#ff0000" stroke="#ff0000">11Ari26</tspan><tspan fill="#ffffff" stroke="#ffffff">  </tspan><tspan fill="#bfbfbf" stroke="#bfbfbf">+ 0°00'</tspan></text>
<text class="sb" transform="translate(467.6,234) scale(1,1.06)"><tspan fill="#0000ff" stroke="#0000ff">Moon: </tspan><tspan fill="#ff0000" stroke="#ff0000">29Ari15</tspan><tspan fill="#ffffff" stroke="#ffffff">  </tspan><tspan fill="#bfbfbf" stroke="#bfbfbf">+ 0°35'</tspan></text>
<text class="sb" transform="translate(467.6,244) scale(1,1.06)"><tspan fill="#00ff00" stroke="#00ff00">Merc: </tspan><tspan fill="#0000ff" stroke="#0000ff">28Pis47</tspan><tspan fill="#ffffff" stroke="#ffffff">  </tspan><tspan fill="#bfbfbf" stroke="#bfbfbf">- 2°08'</tspan></text>
<text class="sb" transform="translate(467.6,254) scale(1,1.06)"><tspan fill="#00ff00" stroke="#00ff00">Venu: </tspan><tspan fill="#0000ff" stroke="#0000ff"> 5Pis18</tspan><tspan fill="#ffffff" stroke="#ffffff">  </tspan><tspan fill="#bfbfbf" stroke="#bfbfbf">- 0°50'</tspan></text>
<text class="sb" transform="translate(467.6,264) scale(1,1.06)"><tspan fill="#ff0000" stroke="#ff0000">Mars: </tspan><tspan fill="#ff0000" stroke="#ff0000">13Leo32</tspan><tspan fill="#ffffff" stroke="#ffffff">  </tspan><tspan fill="#bfbfbf" stroke="#bfbfbf">+ 3°06'</tspan></text>
<text class="sb" transform="translate(467.6,274) scale(1,1.06)"><tspan fill="#ff0000" stroke="#ff0000">Jupi: </tspan><tspan fill="#ff0000" stroke="#ff0000">15Sag23</tspan><tspan fill="#ffffff" stroke="#ffffff">R </tspan><tspan fill="#bfbfbf" stroke="#bfbfbf">+ 0°49'</tspan></text>
<text class="sb" transform="translate(467.6,284) scale(1,1.06)"><tspan fill="#ffff00" stroke="#ffff00">Satu: </tspan><tspan fill="#0000ff" stroke="#0000ff">18Pis13</tspan><tspan fill="#ffffff" stroke="#ffffff">  </tspan><tspan fill="#bfbfbf" stroke="#bfbfbf">- 1°48'</tspan></text>
<text class="sb" transform="translate(467.6,294) scale(1,1.06)"><tspan fill="#00ff00" stroke="#00ff00">Uran: </tspan><tspan fill="#00ff00" stroke="#00ff00"> 0Aqu00</tspan><tspan fill="#ffffff" stroke="#ffffff">  </tspan><tspan fill="#bfbfbf" stroke="#bfbfbf">- 0°31'</tspan></text>
<text class="sb" transform="translate(467.6,304) scale(1,1.06)"><tspan fill="#0000ff" stroke="#0000ff">Nept: </tspan><tspan fill="#ffff00" stroke="#ffff00">25Cap22</tspan><tspan fill="#ffffff" stroke="#ffffff">  </tspan><tspan fill="#bfbfbf" stroke="#bfbfbf">+ 0°33'</tspan></text>
<text class="sb" transform="translate(467.6,314) scale(1,1.06)"><tspan fill="#0000ff" stroke="#0000ff">Plut: </tspan><tspan fill="#ff0000" stroke="#ff0000"> 0Sag23</tspan><tspan fill="#ffffff" stroke="#ffffff">R </tspan><tspan fill="#bfbfbf" stroke="#bfbfbf">+13°51'</tspan></text>
<text class="sb" transform="translate(467.6,334) scale(1,1.06)"><tspan fill="#bfbfbf" stroke="#bfbfbf">Fire: 5, Earth: 1,</tspan></text>
<text class="sb" transform="translate(467.6,344) scale(1,1.06)"><tspan fill="#bfbfbf" stroke="#bfbfbf">Air : 1, Water: 3</tspan></text>
<text class="sb" transform="translate(467.6,354) scale(1,1.06)"><tspan fill="#bfbfbf" stroke="#bfbfbf">Car: 3, Fix: 2, Mut: 5</tspan></text>
<text class="sb" transform="translate(467.6,364) scale(1,1.06)"><tspan fill="#bfbfbf" stroke="#bfbfbf">Yang: 6, Yin: 4</tspan></text>
<text class="sb" transform="translate(467.6,374) scale(1,1.06)"><tspan fill="#bfbfbf" stroke="#bfbfbf">M: 9, N: 1, A: 6, D: 4</tspan></text>
<text class="sb" transform="translate(467.6,384) scale(1,1.06)"><tspan fill="#bfbfbf" stroke="#bfbfbf">Ang: 4, Suc: 3, Cad: 3</tspan></text>
<text class="sb" transform="translate(467.6,394) scale(1,1.06)"><tspan fill="#bfbfbf" stroke="#bfbfbf">Learn: 3, Share: 7</tspan></text>
</g>
</svg>
</body></html>
